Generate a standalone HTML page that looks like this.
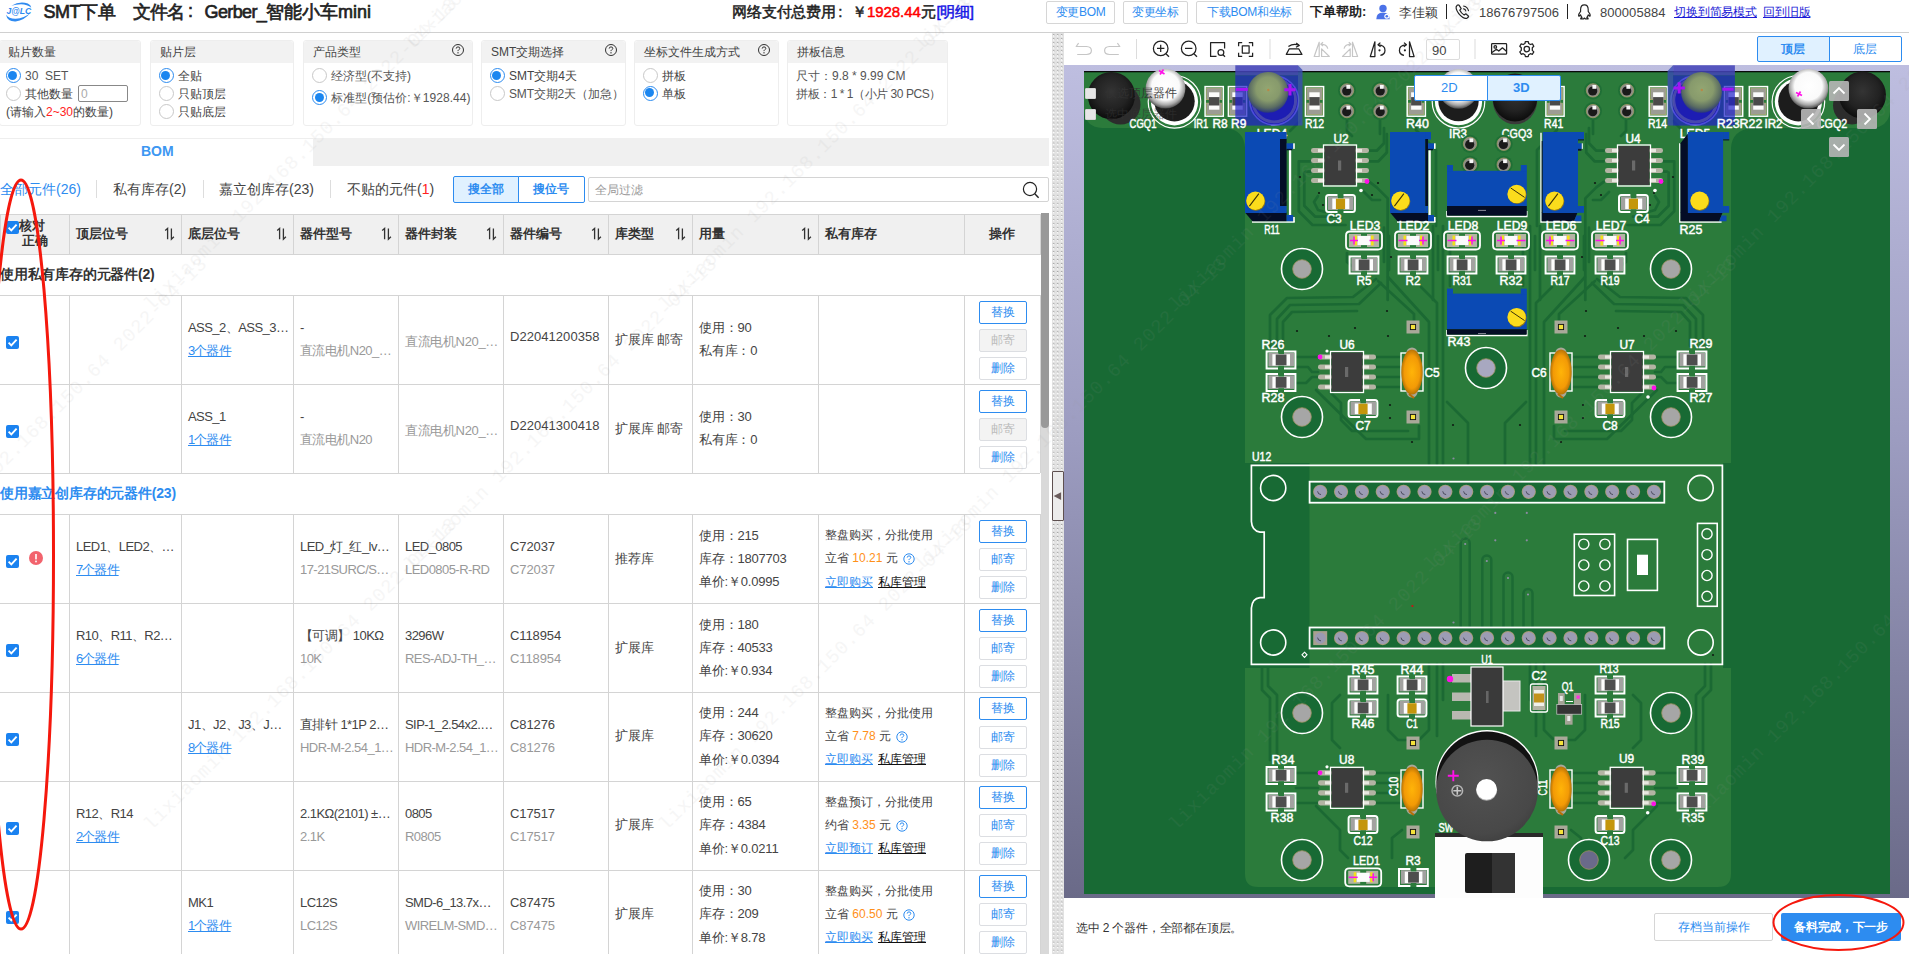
<!DOCTYPE html>
<html><head><meta charset="utf-8"><title>SMT</title>
<style>
*{box-sizing:border-box}
html,body{margin:0;padding:0}
body{width:1909px;height:954px;overflow:hidden;position:relative;background:#fff;
 font-family:"Liberation Sans",sans-serif;font-size:12px;color:#333;}
.a{position:absolute;white-space:nowrap;}
.t{position:absolute;white-space:nowrap;overflow:hidden;}
.b{font-weight:bold}
.blue{color:#2d8cf0}
.lnk{color:#2d8cf0;text-decoration:underline}
.gray{color:#999}
.btn{position:absolute;border:1px solid #dcdee2;border-radius:2px;background:#fff;color:#2d8cf0;text-align:center;white-space:nowrap;overflow:hidden}
.panel{position:absolute;top:40px;height:86px;border:1px solid #eee;border-radius:3px;background:#fff}
.panel .h{position:absolute;left:0;top:0;right:0;height:22px;background:#f2f2f2;border-radius:3px 3px 0 0}
.rad{position:absolute;width:15px;height:15px;border-radius:50%;border:1px solid #c8c8c8;background:#fff}
.rad.on{border:1.5px solid #2d8cf0}
.rad.on:after{content:"";position:absolute;left:1.5px;top:1.5px;width:9px;height:9px;border-radius:50%;background:#1b86f0}
.vl{position:absolute;width:1px;background:#d4d4d4}
.hl{position:absolute;height:1px;background:#d4d4d4}
.cb{position:absolute;width:13px;height:13px;border-radius:2px;background:#1a82f0}
.cb svg{position:absolute;left:0;top:0}
.c13{font-size:13px;line-height:16px}
</style></head>
<body>
<div class="hl" style="left:0;top:32px;width:1909px;background:#d0d0d0"></div>
<svg class="a" style="left:0px;top:0px" width="40" height="26" viewBox="0 0 40 26"><path d="M6 14.800 Q7.400 21.800 15.600 21.500 Q24.200 20.600 30.600 12.800 Q24.200 18.300 15.800 18.800 Q9 19 6 14.800Z" fill="#2f8af0"/><path d="M11.400 5.700 Q19.600 0.600 27.800 3.400 Q31 4.800 31.300 7.800 Q27.400 4.300 21 4.200 Q15.600 4.300 11.400 5.700Z" fill="#2f8af0"/><text x="6.600" y="13.900" font-family="Liberation Sans, sans-serif" font-size="9.6" font-weight="bold" font-style="italic" fill="#2f8af0" textLength="24.600" lengthAdjust="spacingAndGlyphs">J@LC</text></svg>
<div class="a" style="left:43.4px;top:-0.4px;font-size:18px;line-height:24px;color:#222;-webkit-text-stroke:0.65px #222;letter-spacing:-0.5px">SMT</div>
<div class="a" style="left:80.2px;top:-0.4px;font-size:18px;line-height:24px;color:#222;-webkit-text-stroke:0.65px #222;letter-spacing:-0.3px">下单</div>
<div class="a" style="left:132.7px;top:-0.4px;font-size:18px;line-height:24px;color:#222;-webkit-text-stroke:0.65px #222;letter-spacing:-0.7px">文件名</div>
<div class="a" style="left:188px;top:-0.8px;font-size:18px;line-height:24px;color:#222;-webkit-text-stroke:0.65px #222;">:</div>
<div class="a" style="left:204.5px;top:-0.4px;font-size:18px;line-height:24px;color:#222;-webkit-text-stroke:0.65px #222;letter-spacing:-0.62px">Gerber_</div>
<div class="a" style="left:266.4px;top:-0.4px;font-size:18px;line-height:24px;color:#222;-webkit-text-stroke:0.65px #222;letter-spacing:-0.15px">智能小车</div>
<div class="a" style="left:337.9px;top:-0.4px;font-size:18px;line-height:24px;color:#222;-webkit-text-stroke:0.65px #222;">mini</div>
<div class="a" style="left:732.4px;top:1px;font-size:15px;line-height:21px;color:#222;-webkit-text-stroke-width:0.5px;letter-spacing:-0.25px">网络支付总费用</div>
<div class="a" style="left:838.3px;top:0.7px;font-size:15px;line-height:21px;color:#222;-webkit-text-stroke-width:0.5px;">:</div>
<div class="a" style="left:852px;top:1px;font-size:15px;line-height:21px;color:#222;-webkit-text-stroke-width:0.5px;">￥</div>
<div class="a" style="left:866.9px;top:1px;font-size:15px;line-height:21px;color:#222;-webkit-text-stroke-width:0.5px;color:#f00;letter-spacing:-0.05px">1928.44</div>
<div class="a" style="left:921.2px;top:1px;font-size:15px;line-height:21px;color:#222;-webkit-text-stroke-width:0.5px;">元</div>
<div class="a" style="left:936.6px;top:1px;font-size:15px;line-height:21px;color:#222;-webkit-text-stroke-width:0.5px;color:#1414e6;letter-spacing:-0.3px">[明细]</div>
<div class="panel" style="left:-1px;width:142px"><div class="h"></div></div>
<div class="a" style="left:8px;top:42.5px;font-size:12px;line-height:18px;color:#444">贴片数量</div>
<div class="panel" style="left:150px;width:144px"><div class="h"></div></div>
<div class="a" style="left:160px;top:42.5px;font-size:12px;line-height:18px;color:#444">贴片层</div>
<div class="panel" style="left:303px;width:170px"><div class="h"></div></div>
<div class="a" style="left:313px;top:42.5px;font-size:12px;line-height:18px;color:#444">产品类型</div>
<svg class="a" style="left:451px;top:43px" width="14" height="14" viewBox="0 0 14 14"><circle cx="7" cy="7" r="5.5" fill="none" stroke="#333" stroke-width="1"/><path d="M5.2 5.6 Q5.2 3.9 7 3.9 Q8.8 3.9 8.8 5.4 Q8.8 6.4 7.6 6.9 Q7 7.2 7 8.1" fill="none" stroke="#333" stroke-width="1"/><rect x="6.4" y="9.2" width="1.2" height="1.2" fill="#333"/></svg>
<div class="panel" style="left:481px;width:145px"><div class="h"></div></div>
<div class="a" style="left:491px;top:42.5px;font-size:12px;line-height:18px;color:#444">SMT交期选择</div>
<svg class="a" style="left:604px;top:43px" width="14" height="14" viewBox="0 0 14 14"><circle cx="7" cy="7" r="5.5" fill="none" stroke="#333" stroke-width="1"/><path d="M5.2 5.6 Q5.2 3.9 7 3.9 Q8.8 3.9 8.8 5.4 Q8.8 6.4 7.6 6.9 Q7 7.2 7 8.1" fill="none" stroke="#333" stroke-width="1"/><rect x="6.4" y="9.2" width="1.2" height="1.2" fill="#333"/></svg>
<div class="panel" style="left:634px;width:145px"><div class="h"></div></div>
<div class="a" style="left:644px;top:42.5px;font-size:12px;line-height:18px;color:#444">坐标文件生成方式</div>
<svg class="a" style="left:757px;top:43px" width="14" height="14" viewBox="0 0 14 14"><circle cx="7" cy="7" r="5.5" fill="none" stroke="#333" stroke-width="1"/><path d="M5.2 5.6 Q5.2 3.9 7 3.9 Q8.8 3.9 8.8 5.4 Q8.8 6.4 7.6 6.9 Q7 7.2 7 8.1" fill="none" stroke="#333" stroke-width="1"/><rect x="6.4" y="9.2" width="1.2" height="1.2" fill="#333"/></svg>
<div class="panel" style="left:787px;width:161px"><div class="h"></div></div>
<div class="a" style="left:797px;top:42.5px;font-size:12px;line-height:18px;color:#444">拼板信息</div>
<div class="rad on" style="left:5.5px;top:68.0px"></div>
<div class="a" style="left:25px;top:67px;font-size:12px;line-height:18px;color:#555">30&nbsp; SET</div>
<div class="rad" style="left:5.5px;top:85.5px"></div>
<div class="a" style="left:25px;top:84.5px;font-size:12px;line-height:18px;color:#444">其他数量</div>
<div class="a" style="left:78px;top:85px;width:50px;height:17px;border:1px solid #888;border-radius:2px;background:#fff"></div>
<div class="a" style="left:81px;top:84.5px;font-size:12px;line-height:18px;color:#aaa">0</div>
<div class="a" style="left:6px;top:102.5px;font-size:12px;line-height:18px;color:#444">(请输入<span style="color:#f22">2~30</span>的数量)</div>
<div class="rad on" style="left:158.5px;top:68.0px"></div>
<div class="a" style="left:178px;top:67px;font-size:12px;line-height:18px;color:#444">全贴</div>
<div class="rad" style="left:158.5px;top:85.5px"></div>
<div class="a" style="left:178px;top:84.5px;font-size:12px;line-height:18px;color:#444">只贴顶层</div>
<div class="rad" style="left:158.5px;top:103.5px"></div>
<div class="a" style="left:178px;top:102.5px;font-size:12px;line-height:18px;color:#444">只贴底层</div>
<div class="rad" style="left:312.0px;top:68.0px"></div>
<div class="a" style="left:331px;top:67px;font-size:12px;line-height:18px;color:#555">经济型(不支持)</div>
<div class="rad on" style="left:312.0px;top:90.0px"></div>
<div class="a" style="left:331px;top:89px;font-size:12px;line-height:18px;color:#555;letter-spacing:0.05px">标准型(预估价:￥1928.44)</div>
<div class="rad on" style="left:489.5px;top:68.0px"></div>
<div class="a" style="left:509px;top:67px;font-size:12px;line-height:18px;color:#444">SMT交期4天</div>
<div class="rad" style="left:489.5px;top:85.5px"></div>
<div class="a" style="left:509px;top:84.5px;font-size:12px;line-height:18px;color:#555;letter-spacing:-0.15px">SMT交期2天（加急）</div>
<div class="rad" style="left:642.5px;top:68.0px"></div>
<div class="a" style="left:662px;top:67px;font-size:12px;line-height:18px;color:#444">拼板</div>
<div class="rad on" style="left:642.5px;top:85.5px"></div>
<div class="a" style="left:662px;top:84.5px;font-size:12px;line-height:18px;color:#444">单板</div>
<div class="a" style="left:796px;top:67px;font-size:12px;line-height:18px;color:#555">尺寸：9.8 * 9.99 CM</div>
<div class="a" style="left:796px;top:84.5px;font-size:12px;line-height:18px;color:#555;letter-spacing:-0.45px">拼板：1 * 1（小片 30 PCS）</div>
<div class="a" style="left:313px;top:138px;width:736px;height:28px;background:#f0f0f0"></div>
<div class="hl" style="left:0;top:138px;width:313px;background:#eee"></div>
<div class="a" style="left:141px;top:141.2px;font-size:14px;line-height:20px;font-weight:bold;color:#3d97f2">BOM</div>
<div class="a" style="left:0px;top:178.7px;font-size:14px;line-height:20px;color:#2d8cf0">全部元件(26)</div>
<div class="a" style="left:113px;top:178.7px;font-size:14px;line-height:20px;color:#444">私有库存(2)</div>
<div class="a" style="left:219px;top:178.7px;font-size:14px;line-height:20px;color:#444">嘉立创库存(23)</div>
<div class="a" style="left:347px;top:178.7px;font-size:14px;line-height:20px;color:#444">不贴的元件(<span style="color:#f22">1</span>)</div>
<div class="vl" style="left:96px;top:180px;height:18px;background:#ddd"></div>
<div class="vl" style="left:203px;top:180px;height:18px;background:#ddd"></div>
<div class="vl" style="left:330px;top:180px;height:18px;background:#ddd"></div>
<div class="a" style="left:453px;top:176px;width:66px;height:27px;border:1px solid #2d8cf0;border-radius:2px 0 0 2px;background:#e0f1ff"></div>
<div class="a" style="left:518px;top:176px;width:67px;height:27px;border:1px solid #2d8cf0;border-radius:0 2px 2px 0;background:#fff"></div>
<div class="a" style="left:468px;top:180px;font-size:12px;line-height:18px;color:#2d8cf0;font-weight:bold">搜全部</div>
<div class="a" style="left:533px;top:180px;font-size:12px;line-height:18px;color:#2d8cf0;font-weight:bold">搜位号</div>
<div class="a" style="left:588px;top:177px;width:461px;height:25px;border:1px solid #d4d4d4;border-radius:2px;background:#fff"></div>
<div class="a" style="left:595px;top:181px;font-size:12px;line-height:18px;color:#999">全局过滤</div>
<svg class="a" style="left:1021px;top:180px" width="20" height="20" viewBox="0 0 20 20"><circle cx="9" cy="9" r="6.6" fill="none" stroke="#222" stroke-width="1.2"/><path d="M13.8 13.8 L17.6 17.8" stroke="#222" stroke-width="1.4"/></svg>
<div class="a" style="left:0;top:214px;width:1040px;height:41px;background:#f0f0f0;border-top:1px solid #d4d4d4;border-bottom:1px solid #d4d4d4"></div>
<div class="vl" style="left:69px;top:214px;height:41px"></div>
<div class="vl" style="left:181px;top:214px;height:41px"></div>
<div class="vl" style="left:293px;top:214px;height:41px"></div>
<div class="vl" style="left:398px;top:214px;height:41px"></div>
<div class="vl" style="left:503px;top:214px;height:41px"></div>
<div class="vl" style="left:608px;top:214px;height:41px"></div>
<div class="vl" style="left:692px;top:214px;height:41px"></div>
<div class="vl" style="left:818px;top:214px;height:41px"></div>
<div class="vl" style="left:964px;top:214px;height:41px"></div>
<div class="vl" style="left:1040px;top:214px;height:41px"></div>
<div class="vl" style="left:0px;top:214px;height:41px"></div>
<div class="cb" style="left:6px;top:221px"><svg width="13" height="13" viewBox="0 0 13 13"><path d="M2.6 6.6 L5.3 9.3 L10.6 3.6" fill="none" stroke="#fff" stroke-width="1.9"/></svg></div>
<div class="a" style="left:19px;top:219.4px;font-size:13px;line-height:14px;font-weight:bold;color:#333">核对</div>
<div class="a" style="left:22px;top:233.5px;font-size:13px;line-height:14px;font-weight:bold;color:#333">正确</div>
<div class="a" style="left:76px;top:223.9px;font-size:13px;line-height:19px;font-weight:bold;color:#333">顶层位号</div>
<svg class="a" style="left:164px;top:226.5px" width="12" height="14" viewBox="0 0 12 14"><path d="M1.2 3.6 L3.6 1.5 L3.6 12.2" fill="none" stroke="#333" stroke-width="1.3"/><path d="M7.4 1.5 L7.4 12.2 L9.9 9.8" fill="none" stroke="#333" stroke-width="1.3"/></svg>
<div class="a" style="left:188px;top:223.9px;font-size:13px;line-height:19px;font-weight:bold;color:#333">底层位号</div>
<svg class="a" style="left:276px;top:226.5px" width="12" height="14" viewBox="0 0 12 14"><path d="M1.2 3.6 L3.6 1.5 L3.6 12.2" fill="none" stroke="#333" stroke-width="1.3"/><path d="M7.4 1.5 L7.4 12.2 L9.9 9.8" fill="none" stroke="#333" stroke-width="1.3"/></svg>
<div class="a" style="left:300px;top:223.9px;font-size:13px;line-height:19px;font-weight:bold;color:#333">器件型号</div>
<svg class="a" style="left:381px;top:226.5px" width="12" height="14" viewBox="0 0 12 14"><path d="M1.2 3.6 L3.6 1.5 L3.6 12.2" fill="none" stroke="#333" stroke-width="1.3"/><path d="M7.4 1.5 L7.4 12.2 L9.9 9.8" fill="none" stroke="#333" stroke-width="1.3"/></svg>
<div class="a" style="left:405px;top:223.9px;font-size:13px;line-height:19px;font-weight:bold;color:#333">器件封装</div>
<svg class="a" style="left:486px;top:226.5px" width="12" height="14" viewBox="0 0 12 14"><path d="M1.2 3.6 L3.6 1.5 L3.6 12.2" fill="none" stroke="#333" stroke-width="1.3"/><path d="M7.4 1.5 L7.4 12.2 L9.9 9.8" fill="none" stroke="#333" stroke-width="1.3"/></svg>
<div class="a" style="left:510px;top:223.9px;font-size:13px;line-height:19px;font-weight:bold;color:#333">器件编号</div>
<svg class="a" style="left:591px;top:226.5px" width="12" height="14" viewBox="0 0 12 14"><path d="M1.2 3.6 L3.6 1.5 L3.6 12.2" fill="none" stroke="#333" stroke-width="1.3"/><path d="M7.4 1.5 L7.4 12.2 L9.9 9.8" fill="none" stroke="#333" stroke-width="1.3"/></svg>
<div class="a" style="left:615px;top:223.9px;font-size:13px;line-height:19px;font-weight:bold;color:#333">库类型</div>
<svg class="a" style="left:675px;top:226.5px" width="12" height="14" viewBox="0 0 12 14"><path d="M1.2 3.6 L3.6 1.5 L3.6 12.2" fill="none" stroke="#333" stroke-width="1.3"/><path d="M7.4 1.5 L7.4 12.2 L9.9 9.8" fill="none" stroke="#333" stroke-width="1.3"/></svg>
<div class="a" style="left:699px;top:223.9px;font-size:13px;line-height:19px;font-weight:bold;color:#333">用量</div>
<svg class="a" style="left:801px;top:226.5px" width="12" height="14" viewBox="0 0 12 14"><path d="M1.2 3.6 L3.6 1.5 L3.6 12.2" fill="none" stroke="#333" stroke-width="1.3"/><path d="M7.4 1.5 L7.4 12.2 L9.9 9.8" fill="none" stroke="#333" stroke-width="1.3"/></svg>
<div class="a" style="left:825px;top:223.9px;font-size:13px;line-height:19px;font-weight:bold;color:#333">私有库存</div>
<div class="a" style="left:989px;top:223.9px;font-size:13px;line-height:19px;font-weight:bold;color:#333">操作</div>
<div class="a" style="left:0px;top:264px;font-size:14px;line-height:20px;font-weight:bold;color:#333;letter-spacing:-0.2px">使用私有库存的元器件(2)</div>
<div class="a" style="left:0px;top:483px;font-size:14px;line-height:20px;font-weight:bold;color:#2d8cf0;letter-spacing:-0.2px">使用嘉立创库存的元器件(23)</div>
<div class="hl" style="left:0;top:295px;width:1040px"></div>
<div class="hl" style="left:0;top:384px;width:1040px"></div>
<div class="hl" style="left:0;top:473px;width:1040px"></div>
<div class="hl" style="left:0;top:514px;width:1040px"></div>
<div class="hl" style="left:0;top:603px;width:1040px"></div>
<div class="hl" style="left:0;top:692px;width:1040px"></div>
<div class="hl" style="left:0;top:781px;width:1040px"></div>
<div class="hl" style="left:0;top:870px;width:1040px"></div>
<div class="vl" style="left:69px;top:295px;height:178px"></div>
<div class="vl" style="left:181px;top:295px;height:178px"></div>
<div class="vl" style="left:293px;top:295px;height:178px"></div>
<div class="vl" style="left:398px;top:295px;height:178px"></div>
<div class="vl" style="left:503px;top:295px;height:178px"></div>
<div class="vl" style="left:608px;top:295px;height:178px"></div>
<div class="vl" style="left:692px;top:295px;height:178px"></div>
<div class="vl" style="left:818px;top:295px;height:178px"></div>
<div class="vl" style="left:964px;top:295px;height:178px"></div>
<div class="vl" style="left:1040px;top:295px;height:178px"></div>
<div class="vl" style="left:69px;top:514px;height:440px"></div>
<div class="vl" style="left:181px;top:514px;height:440px"></div>
<div class="vl" style="left:293px;top:514px;height:440px"></div>
<div class="vl" style="left:398px;top:514px;height:440px"></div>
<div class="vl" style="left:503px;top:514px;height:440px"></div>
<div class="vl" style="left:608px;top:514px;height:440px"></div>
<div class="vl" style="left:692px;top:514px;height:440px"></div>
<div class="vl" style="left:818px;top:514px;height:440px"></div>
<div class="vl" style="left:964px;top:514px;height:440px"></div>
<div class="vl" style="left:1040px;top:514px;height:440px"></div>
<div class="cb" style="left:6px;top:336px"><svg width="13" height="13" viewBox="0 0 13 13"><path d="M2.6 6.6 L5.3 9.3 L10.6 3.6" fill="none" stroke="#fff" stroke-width="1.9"/></svg></div>
<div class="a" style="left:188px;top:318.1px;font-size:13px;line-height:19px;color:#444;letter-spacing:-0.55px;">ASS_2、ASS_3…</div>
<div class="a" style="left:188px;top:341.4px;font-size:13px;line-height:19px;color:#2d8cf0;text-decoration:underline;letter-spacing:-0.9px">3个器件</div>
<div class="a" style="left:300px;top:318.1px;font-size:13px;line-height:19px;color:#444;letter-spacing:-0.55px;">-</div>
<div class="a" style="left:300px;top:341.4px;font-size:13px;line-height:19px;color:#999;letter-spacing:-0.55px;">直流电机N20_…</div>
<div class="a" style="left:405px;top:332.4px;font-size:13px;line-height:19px;color:#999;letter-spacing:-0.35px">直流电机N20_…</div>
<div class="a" style="left:510px;top:326.9px;font-size:13px;line-height:19px;color:#444;letter-spacing:0.05px">D22041200358</div>
<div class="a" style="left:615px;top:329.6px;font-size:13px;line-height:19px;color:#444;letter-spacing:-0.2px">扩展库 邮寄</div>
<div class="a" style="left:699px;top:317.9px;font-size:13px;line-height:19px;color:#444;letter-spacing:-0.2px">使用：90</div>
<div class="a" style="left:699px;top:340.9px;font-size:13px;line-height:19px;color:#444;letter-spacing:-0.2px">私有库：0</div>
<div class="btn" style="left:979px;top:301px;width:48px;height:23px;line-height:21px;font-size:12px;border-color:#2d8cf0;">替换</div>
<div class="btn" style="left:979px;top:329px;width:48px;height:23px;line-height:21px;font-size:12px;background:#f3f3f3;color:#bbb;">邮寄</div>
<div class="btn" style="left:979px;top:357px;width:48px;height:23px;line-height:21px;font-size:12px;">删除</div>
<div class="cb" style="left:6px;top:425px"><svg width="13" height="13" viewBox="0 0 13 13"><path d="M2.6 6.6 L5.3 9.3 L10.6 3.6" fill="none" stroke="#fff" stroke-width="1.9"/></svg></div>
<div class="a" style="left:188px;top:407px;font-size:13px;line-height:19px;color:#444;letter-spacing:-0.55px;">ASS_1</div>
<div class="a" style="left:188px;top:430.3px;font-size:13px;line-height:19px;color:#2d8cf0;text-decoration:underline;letter-spacing:-0.9px">1个器件</div>
<div class="a" style="left:300px;top:407px;font-size:13px;line-height:19px;color:#444;letter-spacing:-0.55px;">-</div>
<div class="a" style="left:300px;top:430.3px;font-size:13px;line-height:19px;color:#999;letter-spacing:-0.55px;">直流电机N20</div>
<div class="a" style="left:405px;top:421.3px;font-size:13px;line-height:19px;color:#999;letter-spacing:-0.35px">直流电机N20_…</div>
<div class="a" style="left:510px;top:415.8px;font-size:13px;line-height:19px;color:#444;letter-spacing:0.05px">D22041300418</div>
<div class="a" style="left:615px;top:418.5px;font-size:13px;line-height:19px;color:#444;letter-spacing:-0.2px">扩展库 邮寄</div>
<div class="a" style="left:699px;top:406.8px;font-size:13px;line-height:19px;color:#444;letter-spacing:-0.2px">使用：30</div>
<div class="a" style="left:699px;top:429.8px;font-size:13px;line-height:19px;color:#444;letter-spacing:-0.2px">私有库：0</div>
<div class="btn" style="left:979px;top:390px;width:48px;height:23px;line-height:21px;font-size:12px;border-color:#2d8cf0;">替换</div>
<div class="btn" style="left:979px;top:418px;width:48px;height:23px;line-height:21px;font-size:12px;background:#f3f3f3;color:#bbb;">邮寄</div>
<div class="btn" style="left:979px;top:446px;width:48px;height:23px;line-height:21px;font-size:12px;">删除</div>
<div class="cb" style="left:6px;top:555px"><svg width="13" height="13" viewBox="0 0 13 13"><path d="M2.6 6.6 L5.3 9.3 L10.6 3.6" fill="none" stroke="#fff" stroke-width="1.9"/></svg></div>
<svg class="a" style="left:29px;top:551px" width="14" height="14" viewBox="0 0 14 14"><circle cx="7" cy="7" r="7" fill="#f2636d"/><rect x="6.2" y="3" width="1.6" height="5.4" fill="#fff"/><rect x="6.2" y="9.6" width="1.6" height="1.7" fill="#fff"/></svg>
<div class="a" style="left:76px;top:537.1px;font-size:13px;line-height:19px;color:#444;letter-spacing:-0.55px;">LED1、LED2、…</div>
<div class="a" style="left:76px;top:560.4px;font-size:13px;line-height:19px;color:#2d8cf0;text-decoration:underline;letter-spacing:-0.9px">7个器件</div>
<div class="a" style="left:300px;top:537.1px;font-size:13px;line-height:19px;color:#444;letter-spacing:-0.55px;">LED_灯_红_lv…</div>
<div class="a" style="left:300px;top:560.4px;font-size:13px;line-height:19px;color:#999;letter-spacing:-0.55px;">17-21SURC/S…</div>
<div class="a" style="left:405px;top:537.1px;font-size:13px;line-height:19px;color:#444;letter-spacing:-0.55px;">LED_0805</div>
<div class="a" style="left:405px;top:560.4px;font-size:13px;line-height:19px;color:#999;letter-spacing:-0.55px;">LED0805-R-RD</div>
<div class="a" style="left:510px;top:537.1px;font-size:13px;line-height:19px;color:#444;letter-spacing:-0.1px;">C72037</div>
<div class="a" style="left:510px;top:560.4px;font-size:13px;line-height:19px;color:#999;letter-spacing:-0.1px;">C72037</div>
<div class="a" style="left:615px;top:548.6px;font-size:13px;line-height:19px;color:#444;letter-spacing:-0.2px">推荐库</div>
<div class="a" style="left:699px;top:525.6px;font-size:13px;line-height:19px;color:#444;letter-spacing:-0.2px">使用：215</div>
<div class="a" style="left:699px;top:548.7px;font-size:13px;line-height:19px;color:#444;letter-spacing:-0.2px">库存：1807703</div>
<div class="a" style="left:699px;top:572.1px;font-size:13px;line-height:19px;color:#444;letter-spacing:-0.2px">单价:￥0.0995</div>
<div class="a" style="left:825px;top:526.1px;font-size:12px;line-height:18px;color:#444">整盘购买，分批使用</div>
<div class="a" style="left:825px;top:549.2px;font-size:12px;line-height:18px;color:#444">立省 <span style="color:#ff9019">10.21</span> 元</div>
<svg class="a" style="left:902px;top:552.4px" width="14" height="14" viewBox="0 0 14 14"><circle cx="7" cy="7" r="5.2" fill="none" stroke="#2d8cf0" stroke-width="1"/><path d="M5.2 5.6 Q5.2 3.9 7 3.9 Q8.8 3.9 8.8 5.4 Q8.8 6.4 7.6 6.9 Q7 7.2 7 8.1" fill="none" stroke="#2d8cf0" stroke-width="1"/><rect x="6.4" y="9.2" width="1.2" height="1.2" fill="#2d8cf0"/></svg>
<div class="a" style="left:825px;top:572.6px;font-size:12px;line-height:18px;"><span class="lnk">立即购买</span></div>
<div class="a" style="left:878px;top:572.6px;font-size:12px;line-height:18px;"><span style="color:#111;text-decoration:underline">私库管理</span></div>
<div class="btn" style="left:979px;top:520px;width:48px;height:23px;line-height:21px;font-size:12px;border-color:#2d8cf0;">替换</div>
<div class="btn" style="left:979px;top:548px;width:48px;height:23px;line-height:21px;font-size:12px;">邮寄</div>
<div class="btn" style="left:979px;top:576px;width:48px;height:23px;line-height:21px;font-size:12px;">删除</div>
<div class="cb" style="left:6px;top:644px"><svg width="13" height="13" viewBox="0 0 13 13"><path d="M2.6 6.6 L5.3 9.3 L10.6 3.6" fill="none" stroke="#fff" stroke-width="1.9"/></svg></div>
<div class="a" style="left:76px;top:626px;font-size:13px;line-height:19px;color:#444;letter-spacing:-0.55px;">R10、R11、R2…</div>
<div class="a" style="left:76px;top:649.3px;font-size:13px;line-height:19px;color:#2d8cf0;text-decoration:underline;letter-spacing:-0.9px">6个器件</div>
<div class="a" style="left:300px;top:626px;font-size:13px;line-height:19px;color:#444;letter-spacing:-0.55px;">【可调】&nbsp;10KΩ</div>
<div class="a" style="left:300px;top:649.3px;font-size:13px;line-height:19px;color:#999;letter-spacing:-0.55px;">10K</div>
<div class="a" style="left:405px;top:626px;font-size:13px;line-height:19px;color:#444;letter-spacing:-0.55px;">3296W</div>
<div class="a" style="left:405px;top:649.3px;font-size:13px;line-height:19px;color:#999;letter-spacing:-0.55px;">RES-ADJ-TH_…</div>
<div class="a" style="left:510px;top:626px;font-size:13px;line-height:19px;color:#444;letter-spacing:-0.1px;">C118954</div>
<div class="a" style="left:510px;top:649.3px;font-size:13px;line-height:19px;color:#999;letter-spacing:-0.1px;">C118954</div>
<div class="a" style="left:615px;top:637.5px;font-size:13px;line-height:19px;color:#444;letter-spacing:-0.2px">扩展库</div>
<div class="a" style="left:699px;top:614.5px;font-size:13px;line-height:19px;color:#444;letter-spacing:-0.2px">使用：180</div>
<div class="a" style="left:699px;top:637.6px;font-size:13px;line-height:19px;color:#444;letter-spacing:-0.2px">库存：40533</div>
<div class="a" style="left:699px;top:661px;font-size:13px;line-height:19px;color:#444;letter-spacing:-0.2px">单价:￥0.934</div>
<div class="btn" style="left:979px;top:609px;width:48px;height:23px;line-height:21px;font-size:12px;border-color:#2d8cf0;">替换</div>
<div class="btn" style="left:979px;top:637px;width:48px;height:23px;line-height:21px;font-size:12px;">邮寄</div>
<div class="btn" style="left:979px;top:665px;width:48px;height:23px;line-height:21px;font-size:12px;">删除</div>
<div class="cb" style="left:6px;top:733px"><svg width="13" height="13" viewBox="0 0 13 13"><path d="M2.6 6.6 L5.3 9.3 L10.6 3.6" fill="none" stroke="#fff" stroke-width="1.9"/></svg></div>
<div class="a" style="left:188px;top:714.8px;font-size:13px;line-height:19px;color:#444;letter-spacing:-0.55px;">J1、J2、J3、J…</div>
<div class="a" style="left:188px;top:738.1px;font-size:13px;line-height:19px;color:#2d8cf0;text-decoration:underline;letter-spacing:-0.9px">8个器件</div>
<div class="a" style="left:300px;top:714.8px;font-size:13px;line-height:19px;color:#444;letter-spacing:-0.55px;">直排针 1*1P 2…</div>
<div class="a" style="left:300px;top:738.1px;font-size:13px;line-height:19px;color:#999;letter-spacing:-0.55px;">HDR-M-2.54_1…</div>
<div class="a" style="left:405px;top:714.8px;font-size:13px;line-height:19px;color:#444;letter-spacing:-0.55px;">SIP-1_2.54x2.…</div>
<div class="a" style="left:405px;top:738.1px;font-size:13px;line-height:19px;color:#999;letter-spacing:-0.55px;">HDR-M-2.54_1…</div>
<div class="a" style="left:510px;top:714.8px;font-size:13px;line-height:19px;color:#444;letter-spacing:-0.1px;">C81276</div>
<div class="a" style="left:510px;top:738.1px;font-size:13px;line-height:19px;color:#999;letter-spacing:-0.1px;">C81276</div>
<div class="a" style="left:615px;top:726.3px;font-size:13px;line-height:19px;color:#444;letter-spacing:-0.2px">扩展库</div>
<div class="a" style="left:699px;top:703.3px;font-size:13px;line-height:19px;color:#444;letter-spacing:-0.2px">使用：244</div>
<div class="a" style="left:699px;top:726.4px;font-size:13px;line-height:19px;color:#444;letter-spacing:-0.2px">库存：30620</div>
<div class="a" style="left:699px;top:749.8px;font-size:13px;line-height:19px;color:#444;letter-spacing:-0.2px">单价:￥0.0394</div>
<div class="a" style="left:825px;top:703.8px;font-size:12px;line-height:18px;color:#444">整盘购买，分批使用</div>
<div class="a" style="left:825px;top:726.9px;font-size:12px;line-height:18px;color:#444">立省 <span style="color:#ff9019">7.78</span> 元</div>
<svg class="a" style="left:895px;top:730.1px" width="14" height="14" viewBox="0 0 14 14"><circle cx="7" cy="7" r="5.2" fill="none" stroke="#2d8cf0" stroke-width="1"/><path d="M5.2 5.6 Q5.2 3.9 7 3.9 Q8.8 3.9 8.8 5.4 Q8.8 6.4 7.6 6.9 Q7 7.2 7 8.1" fill="none" stroke="#2d8cf0" stroke-width="1"/><rect x="6.4" y="9.2" width="1.2" height="1.2" fill="#2d8cf0"/></svg>
<div class="a" style="left:825px;top:750.3px;font-size:12px;line-height:18px;"><span class="lnk">立即购买</span></div>
<div class="a" style="left:878px;top:750.3px;font-size:12px;line-height:18px;"><span style="color:#111;text-decoration:underline">私库管理</span></div>
<div class="btn" style="left:979px;top:697px;width:48px;height:23px;line-height:21px;font-size:12px;border-color:#2d8cf0;">替换</div>
<div class="btn" style="left:979px;top:726px;width:48px;height:23px;line-height:21px;font-size:12px;">邮寄</div>
<div class="btn" style="left:979px;top:754px;width:48px;height:23px;line-height:21px;font-size:12px;">删除</div>
<div class="cb" style="left:6px;top:822px"><svg width="13" height="13" viewBox="0 0 13 13"><path d="M2.6 6.6 L5.3 9.3 L10.6 3.6" fill="none" stroke="#fff" stroke-width="1.9"/></svg></div>
<div class="a" style="left:76px;top:803.7px;font-size:13px;line-height:19px;color:#444;letter-spacing:-0.55px;">R12、R14</div>
<div class="a" style="left:76px;top:827px;font-size:13px;line-height:19px;color:#2d8cf0;text-decoration:underline;letter-spacing:-0.9px">2个器件</div>
<div class="a" style="left:300px;top:803.7px;font-size:13px;line-height:19px;color:#444;letter-spacing:-0.55px;">2.1KΩ(2101) ±…</div>
<div class="a" style="left:300px;top:827px;font-size:13px;line-height:19px;color:#999;letter-spacing:-0.55px;">2.1K</div>
<div class="a" style="left:405px;top:803.7px;font-size:13px;line-height:19px;color:#444;letter-spacing:-0.55px;">0805</div>
<div class="a" style="left:405px;top:827px;font-size:13px;line-height:19px;color:#999;letter-spacing:-0.55px;">R0805</div>
<div class="a" style="left:510px;top:803.7px;font-size:13px;line-height:19px;color:#444;letter-spacing:-0.1px;">C17517</div>
<div class="a" style="left:510px;top:827px;font-size:13px;line-height:19px;color:#999;letter-spacing:-0.1px;">C17517</div>
<div class="a" style="left:615px;top:815.2px;font-size:13px;line-height:19px;color:#444;letter-spacing:-0.2px">扩展库</div>
<div class="a" style="left:699px;top:792.2px;font-size:13px;line-height:19px;color:#444;letter-spacing:-0.2px">使用：65</div>
<div class="a" style="left:699px;top:815.3px;font-size:13px;line-height:19px;color:#444;letter-spacing:-0.2px">库存：4384</div>
<div class="a" style="left:699px;top:838.7px;font-size:13px;line-height:19px;color:#444;letter-spacing:-0.2px">单价:￥0.0211</div>
<div class="a" style="left:825px;top:792.7px;font-size:12px;line-height:18px;color:#444">整盘预订，分批使用</div>
<div class="a" style="left:825px;top:815.8px;font-size:12px;line-height:18px;color:#444">约省 <span style="color:#ff9019">3.35</span> 元</div>
<svg class="a" style="left:895px;top:819.0px" width="14" height="14" viewBox="0 0 14 14"><circle cx="7" cy="7" r="5.2" fill="none" stroke="#2d8cf0" stroke-width="1"/><path d="M5.2 5.6 Q5.2 3.9 7 3.9 Q8.8 3.9 8.8 5.4 Q8.8 6.4 7.6 6.9 Q7 7.2 7 8.1" fill="none" stroke="#2d8cf0" stroke-width="1"/><rect x="6.4" y="9.2" width="1.2" height="1.2" fill="#2d8cf0"/></svg>
<div class="a" style="left:825px;top:839.2px;font-size:12px;line-height:18px;"><span class="lnk">立即预订</span></div>
<div class="a" style="left:878px;top:839.2px;font-size:12px;line-height:18px;"><span style="color:#111;text-decoration:underline">私库管理</span></div>
<div class="btn" style="left:979px;top:786px;width:48px;height:23px;line-height:21px;font-size:12px;border-color:#2d8cf0;">替换</div>
<div class="btn" style="left:979px;top:814px;width:48px;height:23px;line-height:21px;font-size:12px;">邮寄</div>
<div class="btn" style="left:979px;top:842px;width:48px;height:23px;line-height:21px;font-size:12px;">删除</div>
<div class="cb" style="left:6px;top:911px"><svg width="13" height="13" viewBox="0 0 13 13"><path d="M2.6 6.6 L5.3 9.3 L10.6 3.6" fill="none" stroke="#fff" stroke-width="1.9"/></svg></div>
<div class="a" style="left:188px;top:892.6px;font-size:13px;line-height:19px;color:#444;letter-spacing:-0.55px;">MK1</div>
<div class="a" style="left:188px;top:915.9px;font-size:13px;line-height:19px;color:#2d8cf0;text-decoration:underline;letter-spacing:-0.9px">1个器件</div>
<div class="a" style="left:300px;top:892.6px;font-size:13px;line-height:19px;color:#444;letter-spacing:-0.55px;">LC12S</div>
<div class="a" style="left:300px;top:915.9px;font-size:13px;line-height:19px;color:#999;letter-spacing:-0.55px;">LC12S</div>
<div class="a" style="left:405px;top:892.6px;font-size:13px;line-height:19px;color:#444;letter-spacing:-0.55px;">SMD-6_13.7x…</div>
<div class="a" style="left:405px;top:915.9px;font-size:13px;line-height:19px;color:#999;letter-spacing:-0.55px;">WIRELM-SMD…</div>
<div class="a" style="left:510px;top:892.6px;font-size:13px;line-height:19px;color:#444;letter-spacing:-0.1px;">C87475</div>
<div class="a" style="left:510px;top:915.9px;font-size:13px;line-height:19px;color:#999;letter-spacing:-0.1px;">C87475</div>
<div class="a" style="left:615px;top:904.1px;font-size:13px;line-height:19px;color:#444;letter-spacing:-0.2px">扩展库</div>
<div class="a" style="left:699px;top:881.1px;font-size:13px;line-height:19px;color:#444;letter-spacing:-0.2px">使用：30</div>
<div class="a" style="left:699px;top:904.2px;font-size:13px;line-height:19px;color:#444;letter-spacing:-0.2px">库存：209</div>
<div class="a" style="left:699px;top:927.6px;font-size:13px;line-height:19px;color:#444;letter-spacing:-0.2px">单价:￥8.78</div>
<div class="a" style="left:825px;top:881.6px;font-size:12px;line-height:18px;color:#444">整盘购买，分批使用</div>
<div class="a" style="left:825px;top:904.7px;font-size:12px;line-height:18px;color:#444">立省 <span style="color:#ff9019">60.50</span> 元</div>
<svg class="a" style="left:902px;top:907.9px" width="14" height="14" viewBox="0 0 14 14"><circle cx="7" cy="7" r="5.2" fill="none" stroke="#2d8cf0" stroke-width="1"/><path d="M5.2 5.6 Q5.2 3.9 7 3.9 Q8.8 3.9 8.8 5.4 Q8.8 6.4 7.6 6.9 Q7 7.2 7 8.1" fill="none" stroke="#2d8cf0" stroke-width="1"/><rect x="6.4" y="9.2" width="1.2" height="1.2" fill="#2d8cf0"/></svg>
<div class="a" style="left:825px;top:928.1px;font-size:12px;line-height:18px;"><span class="lnk">立即购买</span></div>
<div class="a" style="left:878px;top:928.1px;font-size:12px;line-height:18px;"><span style="color:#111;text-decoration:underline">私库管理</span></div>
<div class="btn" style="left:979px;top:875px;width:48px;height:23px;line-height:21px;font-size:12px;border-color:#2d8cf0;">替换</div>
<div class="btn" style="left:979px;top:903px;width:48px;height:23px;line-height:21px;font-size:12px;">邮寄</div>
<div class="btn" style="left:979px;top:931px;width:48px;height:23px;line-height:21px;font-size:12px;">删除</div>
<div class="a" style="left:1041px;top:214px;width:8px;height:740px;background:#d9d9d9"></div>
<div class="a" style="left:1041px;top:213px;width:8px;height:215px;background:#999;border-radius:0 0 4px 4px"></div>
<div class="a" style="left:1052px;top:33px;width:12px;height:921px;background-color:#e2e2e2;background-image:radial-gradient(circle at 1.5px 2.6px,#fafafa 0.7px,rgba(0,0,0,0) 1px),radial-gradient(circle at 1.5px 1.5px,#a8a8a8 0.75px,rgba(0,0,0,0) 1.1px);background-size:4.03px 4.03px;background-position:0px 0.4px"></div>
<div class="a" style="left:1052px;top:471px;width:12px;height:50px;background:#ececec;border:1px solid #5e5050;border-radius:1px"></div>
<svg class="a" style="left:1052px;top:488px" width="12" height="16"><path d="M1.600 8.100 L9.100 4.300 L9.100 11.900Z" fill="#6a5c5c"/></svg>
<svg class="a" style="left:0;top:170px;z-index:50" width="70" height="770" viewBox="0 0 70 770"><ellipse cx="21" cy="384.500" rx="32.500" ry="374.500" fill="none" stroke="#f5180d" stroke-width="3"/></svg>
<div class="btn" style="left:1046px;top:1px;width:69px;height:23px;line-height:21px;font-size:12px;border-color:#d6d6d6;letter-spacing:-0.3px">变更BOM</div>
<div class="btn" style="left:1123px;top:1px;width:65px;height:23px;line-height:21px;font-size:12px;border-color:#d6d6d6;letter-spacing:-0.3px">变更坐标</div>
<div class="btn" style="left:1196px;top:1px;width:107px;height:23px;line-height:21px;font-size:12px;border-color:#d6d6d6;letter-spacing:-0.3px">下载BOM和坐标</div>
<div class="a" style="left:1310px;top:1.5px;font-size:13px;line-height:19px;font-weight:bold;color:#222;letter-spacing:0px">下单帮助:</div>
<svg class="a" style="left:1375px;top:3px" width="18" height="18" viewBox="0 0 18 18"><circle cx="8" cy="5.400" r="3.700" fill="#4b72e8"/><path d="M1.300 16.300 Q1.200 9.600 8 9.600 Q14.800 9.600 14.700 16.300 Z" fill="#4b72e8"/><circle cx="11.800" cy="13.300" r="2.500" fill="#fff"/><circle cx="11.800" cy="13.300" r="1.300" fill="#4b72e8"/></svg>
<div class="a" style="left:1399px;top:2.5px;font-size:13px;line-height:19px;color:#444">李佳颖</div>
<div class="a" style="left:1446px;top:4px;width:1.2px;height:15px;background:#222"></div>
<svg class="a" style="left:1454px;top:3px" width="18" height="18" viewBox="0 0 18 18"><path d="M3.2 2.2 Q1.6 3.4 2.2 5.6 Q3.6 10.6 8.6 14.2 Q11.4 16.2 13.2 15 Q14.6 14 14.6 13.2 L11.8 10.8 L10.2 12 Q7.4 10.4 5.8 7.2 L7.2 5.6 L5 2.2 Q4.2 1.6 3.2 2.2Z" fill="none" stroke="#222" stroke-width="1.2" stroke-linejoin="round"/><path d="M9.2 3 Q13.8 3.6 14.6 8.2" fill="none" stroke="#222" stroke-width="1.1"/><path d="M9.2 5.6 Q11.6 6 12 8.4" fill="none" stroke="#222" stroke-width="1.1"/></svg>
<div class="a" style="left:1479px;top:2.5px;font-size:13px;line-height:19px;color:#444;letter-spacing:0.05px">18676797506</div>
<div class="a" style="left:1567px;top:4px;width:1.2px;height:15px;background:#222"></div>
<svg class="a" style="left:1576px;top:3px" width="17" height="18" viewBox="0 0 17 18"><path d="M8.4 1.8 Q4.6 1.8 4.6 6.6 L4.6 8.4 Q2.4 11 2.6 13 Q3.4 13.4 4.6 11.8 Q5 13.4 6 14.4 Q4.4 15 4.6 15.8 L7.6 15.8 L8.4 15 L9.2 15.8 L12.2 15.8 Q12.4 15 10.8 14.4 Q11.8 13.4 12.2 11.8 Q13.4 13.4 14.2 13 Q14.4 11 12.2 8.4 L12.2 6.6 Q12.2 1.8 8.4 1.8Z" fill="none" stroke="#222" stroke-width="1.15" stroke-linejoin="round"/></svg>
<div class="a" style="left:1600px;top:2.5px;font-size:13px;line-height:19px;color:#444;letter-spacing:0.05px">800005884</div>
<div class="a" style="left:1674px;top:3px;font-size:12px;line-height:18px;color:#1a1ad6;text-decoration:underline;letter-spacing:-0.15px">切换到简易模式</div>
<div class="a" style="left:1763px;top:3px;font-size:12px;line-height:18px;color:#1a1ad6;text-decoration:underline;letter-spacing:-0.15px">回到旧版</div>
<svg class="a" style="left:1064px;top:33px" width="845" height="33" viewBox="1064 33 845 33"><path d="M1078.600 43.200 L1076.200 46.500 L1086.500 46.500 Q1091.400 46.800 1091.400 50.600 Q1091.400 54.500 1086.500 54.500 L1077.200 54.500" fill="none" stroke="#c6c6c6" stroke-width="1.2" stroke-linejoin="round"/><path d="M1117.400 43.200 L1119.800 46.500 L1109.500 46.500 Q1104.600 46.800 1104.600 50.600 Q1104.600 54.500 1109.500 54.500 L1118.800 54.500" fill="none" stroke="#c6c6c6" stroke-width="1.2" stroke-linejoin="round"/><rect x="1136" y="39" width="1" height="20" fill="#dcdcdc"/><circle cx="1160.700" cy="48.400" r="7.300" fill="none" stroke="#222" stroke-width="1.25" stroke-linejoin="round"/><path d="M1165.900 53.700 L1169 56.800" fill="none" stroke="#222" stroke-width="1.25" stroke-linejoin="round"/><path d="M1157 48.400 L1164.400 48.400 M1160.700 44.700 L1160.700 52.100" fill="none" stroke="#222" stroke-width="1.25" stroke-linejoin="round"/><circle cx="1188.700" cy="48.400" r="7.300" fill="none" stroke="#222" stroke-width="1.25" stroke-linejoin="round"/><path d="M1193.900 53.700 L1197 56.800" fill="none" stroke="#222" stroke-width="1.25" stroke-linejoin="round"/><path d="M1185 48.400 L1192.400 48.400" fill="none" stroke="#222" stroke-width="1.25" stroke-linejoin="round"/><path d="M1224.600 48.600 L1224.600 42.600 L1210.600 42.600 L1210.600 56.400 L1216.500 56.400" fill="none" stroke="#222" stroke-width="1.25" stroke-linejoin="round"/><circle cx="1220.900" cy="52.600" r="2.900" fill="none" stroke="#222" stroke-width="1.25" stroke-linejoin="round"/><path d="M1223 54.800 L1225 56.800" fill="none" stroke="#222" stroke-width="1.25" stroke-linejoin="round"/><path d="M1238.600 46.200 L1238.600 42.600 L1242.200 42.600 M1248.800 42.600 L1252.600 42.600 L1252.600 46.200 M1252.600 52.800 L1252.600 56.400 L1248.800 56.400 M1242.200 56.400 L1238.600 56.400 L1238.600 52.800" fill="none" stroke="#222" stroke-width="1.25" stroke-linejoin="round"/><rect x="1242.300" y="45.800" width="6.800" height="7.300" fill="none" stroke="#222" stroke-width="1.25" stroke-linejoin="round"/><rect x="1269.500" y="39" width="1" height="20" fill="#dcdcdc"/><path d="M1289.300 48.800 L1286.300 54.400 L1301.900 54.400 L1298.700 48.800 Z" fill="none" stroke="#222" stroke-width="1.25" stroke-linejoin="round"/><path d="M1288.400 46.600 Q1293.500 42.800 1298.900 45.200" fill="none" stroke="#222" stroke-width="1.25" stroke-linejoin="round"/><path d="M1296.200 43 L1299.300 45.400 L1296 47.300" fill="none" stroke="#222" stroke-width="1.25" stroke-linejoin="round"/><path d="M1319.200 42.200 L1319.200 56.500 L1314.200 56.500 Z" fill="none" stroke="#c6c6c6" stroke-width="1.2" stroke-linejoin="round"/><path d="M1321.600 48.800 L1329.300 56.500 L1321.600 56.500 Z" fill="none" stroke="#c6c6c6" stroke-width="1.2" stroke-linejoin="round"/><path d="M1321 44.200 Q1326.600 44.400 1327.800 48.600" fill="none" stroke="#c6c6c6" stroke-width="1.2" stroke-linejoin="round"/><path d="M1323 42.200 L1320.800 44.200 L1323.200 46" fill="none" stroke="#c6c6c6" stroke-width="1.2" stroke-linejoin="round"/><path d="M1352.500 42.200 L1352.500 56.500 L1357.600 56.500 Z" fill="none" stroke="#c6c6c6" stroke-width="1.2" stroke-linejoin="round"/><path d="M1350.200 48.800 L1342.500 56.500 L1350.200 56.500 Z" fill="none" stroke="#c6c6c6" stroke-width="1.2" stroke-linejoin="round"/><path d="M1350.800 44.200 Q1345.200 44.400 1344 48.600" fill="none" stroke="#c6c6c6" stroke-width="1.2" stroke-linejoin="round"/><path d="M1348.800 42.200 L1351 44.200 L1348.600 46" fill="none" stroke="#c6c6c6" stroke-width="1.2" stroke-linejoin="round"/><path d="M1374.900 41.800 L1374.900 56.500 L1370.300 56.500 Z" fill="none" stroke="#222" stroke-width="1.25" stroke-linejoin="round"/><path d="M1378.300 44.800 Q1385 45 1385 50.400 Q1384.800 54.600 1380.400 55.400" fill="none" stroke="#222" stroke-width="1.25" stroke-linejoin="round"/><path d="M1380.400 42.600 L1378 44.800 L1380.600 46.800" fill="none" stroke="#222" stroke-width="1.25" stroke-linejoin="round"/><circle cx="1379.500" cy="50.300" r="1.100" fill="#222"/><path d="M1409.500 41.800 L1409.500 56.500 L1414.100 56.500 Z" fill="none" stroke="#222" stroke-width="1.25" stroke-linejoin="round"/><path d="M1406.100 44.800 Q1399.400 45 1399.400 50.400 Q1399.600 54.600 1404 55.400" fill="none" stroke="#222" stroke-width="1.25" stroke-linejoin="round"/><path d="M1404 42.600 L1406.400 44.800 L1403.800 46.800" fill="none" stroke="#222" stroke-width="1.25" stroke-linejoin="round"/><circle cx="1404.900" cy="50.300" r="1.100" fill="#222"/><rect x="1474.500" y="39" width="1" height="20" fill="#dcdcdc"/><rect x="1491.600" y="43.600" width="15" height="10.600" rx="0.8" fill="none" stroke="#222" stroke-width="1.25" stroke-linejoin="round"/><circle cx="1495.300" cy="46.900" r="1.300" fill="none" stroke="#222" stroke-width="1.25" stroke-linejoin="round"/><path d="M1492 52.600 L1496.400 49.200 L1498.800 51 L1502.400 47.800 L1506.400 51.200" fill="none" stroke="#222" stroke-width="1.25" stroke-linejoin="round"/><circle cx="1526.800" cy="49.100" r="2.700" fill="none" stroke="#222" stroke-width="1.25" stroke-linejoin="round"/><path d="M1525.400 41.500 L1528.200 41.500 L1528.700 43.500 L1530.400 44.500 L1532.400 43.900 L1533.800 46.300 L1532.300 47.800 L1532.300 50.400 L1533.800 51.900 L1532.400 54.300 L1530.400 53.700 L1528.700 54.700 L1528.200 56.700 L1525.400 56.700 L1524.900 54.700 L1523.200 53.700 L1521.200 54.300 L1519.800 51.900 L1521.300 50.400 L1521.300 47.800 L1519.800 46.300 L1521.200 43.900 L1523.200 44.500 L1524.900 43.500 Z" fill="none" stroke="#222" stroke-width="1.25" stroke-linejoin="round"/></svg>
<div class="a" style="left:1426px;top:39px;width:34px;height:21px;border:1px solid #dcdcdc;border-radius:2px;background:#fff"></div>
<div class="a" style="left:1432px;top:40.5px;font-size:13px;line-height:19px;color:#444">90</div>
<div class="a" style="left:1757px;top:36px;width:73px;height:26px;border:1px solid #2d8cf0;border-radius:2px 0 0 2px;background:#e0f1ff"></div>
<div class="a" style="left:1829px;top:36px;width:73px;height:26px;border:1px solid #2d8cf0;border-radius:0 2px 2px 0;background:#fff"></div>
<div class="a" style="left:1781px;top:39.5px;font-size:12px;line-height:18px;color:#2d8cf0;font-weight:bold">顶层</div>
<div class="a" style="left:1853px;top:39.5px;font-size:12px;line-height:18px;color:#2d8cf0">底层</div>
<div class="a" style="left:1064px;top:898px;width:845px;height:56px;background:#fff"></div>
<div class="a" style="left:1076px;top:918.5px;font-size:12px;line-height:18px;color:#333;letter-spacing:-0.2px">选中 2 个器件，全部都在顶层。</div>
<div class="btn" style="left:1654px;top:913px;width:119px;height:28px;line-height:26px;font-size:12px;border-color:#d6d6d6">存档当前操作</div>
<div class="btn" style="left:1781px;top:913px;width:120px;height:28px;line-height:28px;font-size:12px;border:0;background:#2d8cf0;color:#fff;font-weight:bold;letter-spacing:-0.3px">备料完成，下一步</div>
<svg class="a" style="left:1765px;top:890px;z-index:50" width="144" height="64" viewBox="0 0 144 64"><ellipse cx="73.5" cy="32.5" rx="65" ry="27.5" fill="none" stroke="#f5180d" stroke-width="2"/></svg>
<svg class="a" style="left:1064px;top:65px" width="845" height="833" viewBox="1064 65 845 833" font-family="Liberation Sans, sans-serif" fill="#fff"><defs><linearGradient id="glav" x1="0" x2="0" y1="0" y2="1"><stop offset="0" stop-color="#bebee0"/><stop offset="0.45" stop-color="#9c9cc0"/><stop offset="1" stop-color="#6a6a88"/></linearGradient><radialGradient id="gblk" cx="0.5" cy="0.42" r="0.6"><stop offset="0" stop-color="#343434"/><stop offset="0.6" stop-color="#222"/><stop offset="1" stop-color="#0a0a0a"/></radialGradient><radialGradient id="gwht" cx="0.5" cy="0.44" r="0.56"><stop offset="0" stop-color="#ffffff"/><stop offset="0.62" stop-color="#fafafa"/><stop offset="0.84" stop-color="#a8a8a8"/><stop offset="1" stop-color="#4a4a4a"/></radialGradient><radialGradient id="gled" cx="0.5" cy="0.42" r="0.58"><stop offset="0" stop-color="#93a672"/><stop offset="0.5" stop-color="#879a6c"/><stop offset="0.8" stop-color="#5a6c62"/><stop offset="1" stop-color="#2c3a78"/></radialGradient><radialGradient id="gor" cx="0.5" cy="0.5" r="0.6"><stop offset="0" stop-color="#ffb408"/><stop offset="0.6" stop-color="#f39a06"/><stop offset="1" stop-color="#8a5606"/></radialGradient><radialGradient id="gbz" cx="0.45" cy="0.4" r="0.7"><stop offset="0" stop-color="#525252"/><stop offset="0.75" stop-color="#484848"/><stop offset="1" stop-color="#3a3a3a"/></radialGradient></defs><rect x="1064" y="65" width="845" height="833" fill="url(#glav)"/><rect x="1084" y="71" width="806" height="823" fill="#0a0a0a"/><rect x="1084" y="72.5" width="806" height="821.5" fill="#186a34"/><path d="M1084 72.5 L1890 72.5 L1890 112 Q1888 127 1872 128 L1752 128 Q1732 130 1731 148 L1731 874 Q1731 887 1718 887 L1258 887 Q1245 887 1245 874 L1245 148 Q1244 130 1226 128 L1102 128 Q1086 127 1084 112 Z" fill="#2b7b3b"/><g fill="none" stroke="#1b6933" stroke-width="2.7" stroke-linejoin="round" stroke-linecap="round"><polyline points="1376,279 1353,297 1287,298 1270,315 1270,346"/><polyline points="1597,279 1620,297 1686,298 1703,315 1703,346"/><polyline points="1381,283 1359,304 1290,305 1277,319 1277,346"/><polyline points="1592,283 1614,304 1683,305 1696,319 1696,346"/><polyline points="1357,311 1292,312 1283,322 1283,346"/><polyline points="1616,311 1681,312 1690,322 1690,346"/><polyline points="1378,281 1414,314 1414,320"/><polyline points="1595,281 1559,314 1559,320"/><polyline points="1388,277 1429,322 1429,464"/><polyline points="1585,277 1544,322 1544,464"/><polyline points="1421,287 1437,303 1437,464"/><polyline points="1552,287 1536,303 1536,464"/><polyline points="1433,226 1433,300"/><polyline points="1540,226 1540,300"/><polyline points="1443,226 1443,464"/><polyline points="1530,226 1530,464"/><polyline points="1450,226 1450,286"/><polyline points="1523,226 1523,286"/><polyline points="1447,402 1468,423 1468,464"/><polyline points="1526,402 1505,423 1505,464"/><polyline points="1376,357 1400,357"/><polyline points="1597,357 1573,357"/><polyline points="1376,367 1400,367"/><polyline points="1597,367 1573,367"/><polyline points="1376,377 1400,377"/><polyline points="1597,377 1573,377"/><polyline points="1376,387 1400,387"/><polyline points="1597,387 1573,387"/><polyline points="1296,357 1318,357"/><polyline points="1677,357 1655,357"/><polyline points="1296,367 1308,367 1312,372 1318,372"/><polyline points="1677,367 1665,367 1661,372 1655,372"/><polyline points="1296,383 1306,383 1312,377 1318,377"/><polyline points="1677,383 1667,383 1661,377 1655,377"/><polyline points="1316,390 1366,439 1419,439 1419,426"/><polyline points="1657,390 1607,439 1554,439 1554,426"/><polyline points="1330,392 1341,403 1341,420 1352,431 1408,431"/><polyline points="1643,392 1632,403 1632,420 1621,431 1565,431"/><polyline points="1311.6,161.3 1298.8,161.3 1298.8,211.2 1312.5,225 1345.5,225"/><polyline points="1661.4,161.3 1674.2,161.3 1674.2,211.2 1660.5,225 1627.5,225"/><polyline points="1304.3,172.7 1304.3,205.7 1315.3,216.7 1340,216.7"/><polyline points="1668.7,172.7 1668.7,205.7 1657.7,216.7 1633,216.7"/><polyline points="1311.6,171.6 1306,171.6"/><polyline points="1661.4,171.6 1667,171.6"/><polyline points="1369.4,150.7 1376.7,150.7 1384,143.3 1384,128"/><polyline points="1603.6,150.7 1596.3,150.7 1589,143.3 1589,128"/><polyline points="1369.4,161.3 1378.5,161.3 1386.8,152.5 1386.8,134"/><polyline points="1603.6,161.3 1594.5,161.3 1586.2,152.5 1586.2,134"/><polyline points="1369.4,181.9 1376.7,187.4 1387.7,198.4 1387.7,300"/><polyline points="1603.6,181.9 1596.3,187.4 1585.3,198.4 1585.3,300"/><polyline points="1384,227.7 1384,262"/><polyline points="1589,227.7 1589,262"/><polyline points="1318,196 1314,202 1318,210 1325,212"/><polyline points="1655,196 1659,202 1655,210 1648,212"/><polyline points="1364,192 1372,200 1380,200"/><polyline points="1609,192 1601,200 1593,200"/><polyline points="1389,236 1389,270"/><polyline points="1584,236 1584,270"/><polyline points="1438,236 1438,270"/><polyline points="1535,236 1535,270"/><polyline points="1347,253 1347,262 1352,266"/><polyline points="1626,253 1626,262 1621,266"/><polyline points="1226,130 1226,120"/><polyline points="1747,130 1747,120"/><polyline points="1290,131 1300,121"/><polyline points="1683,131 1673,121"/><polyline points="1347,120 1347,131 1352,136"/><polyline points="1626,120 1626,131 1621,136"/><polyline points="1380,120 1380,134"/><polyline points="1593,120 1593,134"/><polyline points="1416,118 1416,130 1436,150 1436,226"/><polyline points="1557,118 1557,130 1537,150 1537,226"/><polyline points="1429,664 1429,730 1420,739"/><polyline points="1544,664 1544,730 1553,739"/><polyline points="1437,664 1437,736"/><polyline points="1536,664 1536,736"/><polyline points="1443,664 1443,700"/><polyline points="1530,664 1530,700"/><polyline points="1262,664 1262,690 1270,698 1270,760"/><polyline points="1711,664 1711,690 1703,698 1703,760"/><polyline points="1268,664 1268,686 1277,695 1277,760"/><polyline points="1705,664 1705,686 1696,695 1696,760"/><polyline points="1376,773 1400,773"/><polyline points="1597,773 1573,773"/><polyline points="1376,783 1400,783"/><polyline points="1597,783 1573,783"/><polyline points="1376,793 1400,793"/><polyline points="1597,793 1573,793"/><polyline points="1376,803 1400,803"/><polyline points="1597,803 1573,803"/><polyline points="1296,773 1318,773"/><polyline points="1677,773 1655,773"/><polyline points="1296,788 1318,788"/><polyline points="1677,788 1655,788"/><polyline points="1296,803 1318,803"/><polyline points="1677,803 1655,803"/><polyline points="1388,695 1388,730 1398,740 1406,740"/><polyline points="1585,695 1585,730 1575,740 1567,740"/><polyline points="1340,695 1332,703 1332,740 1340,748"/><polyline points="1633,695 1641,703 1641,740 1633,748"/><polyline points="1316,806 1340,830 1340,850 1348,858"/><polyline points="1657,806 1633,830 1633,850 1625,858"/><polyline points="1392,858 1392,838 1402,830"/><polyline points="1581,858 1581,838 1571,830"/></g><g fill="#101c14"><circle cx="1255" cy="138" r="1.1"/><circle cx="1718" cy="138" r="1.1"/><circle cx="1300" cy="177" r="1.1"/><circle cx="1673" cy="177" r="1.1"/><circle cx="1319" cy="193" r="1.1"/><circle cx="1654" cy="193" r="1.1"/><circle cx="1323" cy="205" r="1.1"/><circle cx="1650" cy="205" r="1.1"/><circle cx="1372" cy="195" r="1.1"/><circle cx="1601" cy="195" r="1.1"/><circle cx="1378" cy="183" r="1.1"/><circle cx="1595" cy="183" r="1.1"/><circle cx="1391" cy="257" r="1.1"/><circle cx="1582" cy="257" r="1.1"/><circle cx="1320" cy="271" r="1.1"/><circle cx="1653" cy="271" r="1.1"/><circle cx="1387" cy="311" r="1.1"/><circle cx="1586" cy="311" r="1.1"/><circle cx="1297" cy="331" r="1.1"/><circle cx="1676" cy="331" r="1.1"/><circle cx="1329" cy="336" r="1.1"/><circle cx="1644" cy="336" r="1.1"/><circle cx="1355" cy="328" r="1.1"/><circle cx="1618" cy="328" r="1.1"/><circle cx="1388" cy="336" r="1.1"/><circle cx="1585" cy="336" r="1.1"/><circle cx="1390" cy="405" r="1.1"/><circle cx="1583" cy="405" r="1.1"/><circle cx="1390" cy="418" r="1.1"/><circle cx="1583" cy="418" r="1.1"/><circle cx="1412" cy="442" r="1.1"/><circle cx="1561" cy="442" r="1.1"/><circle cx="1453" cy="425" r="1.1"/><circle cx="1520" cy="425" r="1.1"/><circle cx="1260" cy="655" r="1.1"/><circle cx="1713" cy="655" r="1.1"/></g><circle cx="1174.5" cy="101.8" r="26.3" fill="none" stroke="#fff" stroke-width="1.2"/><circle cx="1174.5" cy="101.8" r="23.6" fill="#fff"/><circle cx="1174.5" cy="101.2" r="20.2" fill="#1c1c1c"/><circle cx="1120.5" cy="104.5" r="20" fill="#2c2c2c"/><circle cx="1111.4" cy="95.6" r="23.6" fill="url(#gblk)"/><circle cx="1165.5" cy="88.6" r="19.9" fill="url(#gwht)"/><path d="M1159 70.500 L1164.500 74 M1160 74.500 L1163.500 69.500" stroke="#ff10e8" stroke-width="1.7"/><rect x="1205.1" y="86.6" width="18.2" height="29.6" fill="none" stroke="#fff" stroke-width="1.5"/><rect x="1206.6" y="88.1" width="15.2" height="11.6" fill="#9c9c94" stroke="#b8b070" stroke-width="0.6"/><rect x="1206.6" y="103.1" width="15.2" height="11.6" fill="#9c9c94" stroke="#b8b070" stroke-width="0.6"/><rect x="1209" y="92.3" width="10.4" height="17.4" fill="#fbfbfb"/><rect x="1209" y="97.1" width="10.4" height="8.4" fill="#4a4a4a"/><rect x="1228.4" y="86.6" width="18.2" height="29.6" fill="none" stroke="#fff" stroke-width="1.5"/><rect x="1229.9" y="88.1" width="15.2" height="11.6" fill="#9c9c94" stroke="#b8b070" stroke-width="0.6"/><rect x="1229.9" y="103.1" width="15.2" height="11.6" fill="#9c9c94" stroke="#b8b070" stroke-width="0.6"/><rect x="1232.3" y="92.3" width="10.4" height="17.4" fill="#fbfbfb"/><rect x="1232.3" y="97.1" width="10.4" height="8.4" fill="#4a4a4a"/><rect x="1305.4" y="86.6" width="18.2" height="29.6" fill="none" stroke="#fff" stroke-width="1.5"/><rect x="1306.9" y="88.1" width="15.2" height="11.6" fill="#9c9c94" stroke="#b8b070" stroke-width="0.6"/><rect x="1306.9" y="103.1" width="15.2" height="11.6" fill="#9c9c94" stroke="#b8b070" stroke-width="0.6"/><rect x="1309.3" y="92.3" width="10.4" height="17.4" fill="#fbfbfb"/><rect x="1309.3" y="97.1" width="10.4" height="8.4" fill="#4a4a4a"/><rect x="1407.2" y="86.6" width="18.2" height="29.6" fill="none" stroke="#fff" stroke-width="1.5"/><rect x="1408.7" y="88.1" width="15.2" height="11.6" fill="#9c9c94" stroke="#b8b070" stroke-width="0.6"/><rect x="1408.7" y="103.1" width="15.2" height="11.6" fill="#9c9c94" stroke="#b8b070" stroke-width="0.6"/><rect x="1411.1" y="92.3" width="10.4" height="17.4" fill="#fbfbfb"/><rect x="1411.1" y="97.1" width="10.4" height="8.4" fill="#4a4a4a"/><rect x="1545.9" y="86.6" width="18.2" height="29.6" fill="none" stroke="#fff" stroke-width="1.5"/><rect x="1547.4" y="88.1" width="15.2" height="11.6" fill="#9c9c94" stroke="#b8b070" stroke-width="0.6"/><rect x="1547.4" y="103.1" width="15.2" height="11.6" fill="#9c9c94" stroke="#b8b070" stroke-width="0.6"/><rect x="1549.8" y="92.3" width="10.4" height="17.4" fill="#fbfbfb"/><rect x="1549.8" y="97.1" width="10.4" height="8.4" fill="#4a4a4a"/><rect x="1649.2" y="86.6" width="18.2" height="29.6" fill="none" stroke="#fff" stroke-width="1.5"/><rect x="1650.7" y="88.1" width="15.2" height="11.6" fill="#9c9c94" stroke="#b8b070" stroke-width="0.6"/><rect x="1650.7" y="103.1" width="15.2" height="11.6" fill="#9c9c94" stroke="#b8b070" stroke-width="0.6"/><rect x="1653.1" y="92.3" width="10.4" height="17.4" fill="#fbfbfb"/><rect x="1653.1" y="97.1" width="10.4" height="8.4" fill="#4a4a4a"/><rect x="1724.5" y="86.6" width="18.2" height="29.6" fill="none" stroke="#fff" stroke-width="1.5"/><rect x="1726" y="88.1" width="15.2" height="11.6" fill="#9c9c94" stroke="#b8b070" stroke-width="0.6"/><rect x="1726" y="103.1" width="15.2" height="11.6" fill="#9c9c94" stroke="#b8b070" stroke-width="0.6"/><rect x="1728.4" y="92.3" width="10.4" height="17.4" fill="#fbfbfb"/><rect x="1728.4" y="97.1" width="10.4" height="8.4" fill="#4a4a4a"/><rect x="1749.3" y="86.6" width="18.2" height="29.6" fill="none" stroke="#fff" stroke-width="1.5"/><rect x="1750.8" y="88.1" width="15.2" height="11.6" fill="#9c9c94" stroke="#b8b070" stroke-width="0.6"/><rect x="1750.8" y="103.1" width="15.2" height="11.6" fill="#9c9c94" stroke="#b8b070" stroke-width="0.6"/><rect x="1753.2" y="92.3" width="10.4" height="17.4" fill="#fbfbfb"/><rect x="1753.2" y="97.1" width="10.4" height="8.4" fill="#4a4a4a"/><circle cx="1347" cy="90.4" r="9" fill="#1f6f36"/><circle cx="1347" cy="90.4" r="6.7" fill="#8e8e88" stroke="#a89c64" stroke-width="0.7"/><circle cx="1346.7" cy="91" r="4.6" fill="#1a1a1a"/><rect x="1346.4" y="85" width="3.8" height="3.8" fill="#f8f8f8"/><circle cx="1347" cy="111.1" r="9" fill="#1f6f36"/><circle cx="1347" cy="111.1" r="6.7" fill="#8e8e88" stroke="#a89c64" stroke-width="0.7"/><circle cx="1346.7" cy="111.7" r="4.6" fill="#1a1a1a"/><rect x="1346.4" y="105.7" width="3.8" height="3.8" fill="#f8f8f8"/><circle cx="1380.5" cy="90.4" r="9" fill="#1f6f36"/><circle cx="1380.5" cy="90.4" r="6.7" fill="#8e8e88" stroke="#a89c64" stroke-width="0.7"/><circle cx="1380.2" cy="91" r="4.6" fill="#1a1a1a"/><rect x="1379.9" y="85" width="3.8" height="3.8" fill="#f8f8f8"/><circle cx="1380.5" cy="111.1" r="9" fill="#1f6f36"/><circle cx="1380.5" cy="111.1" r="6.7" fill="#8e8e88" stroke="#a89c64" stroke-width="0.7"/><circle cx="1380.2" cy="111.7" r="4.6" fill="#1a1a1a"/><rect x="1379.9" y="105.7" width="3.8" height="3.8" fill="#f8f8f8"/><circle cx="1593" cy="90.4" r="9" fill="#1f6f36"/><circle cx="1593" cy="90.4" r="6.7" fill="#8e8e88" stroke="#a89c64" stroke-width="0.7"/><circle cx="1592.7" cy="91" r="4.6" fill="#1a1a1a"/><rect x="1592.4" y="85" width="3.8" height="3.8" fill="#f8f8f8"/><circle cx="1593" cy="111.1" r="9" fill="#1f6f36"/><circle cx="1593" cy="111.1" r="6.7" fill="#8e8e88" stroke="#a89c64" stroke-width="0.7"/><circle cx="1592.7" cy="111.7" r="4.6" fill="#1a1a1a"/><rect x="1592.4" y="105.7" width="3.8" height="3.8" fill="#f8f8f8"/><circle cx="1627" cy="90.4" r="9" fill="#1f6f36"/><circle cx="1627" cy="90.4" r="6.7" fill="#8e8e88" stroke="#a89c64" stroke-width="0.7"/><circle cx="1626.7" cy="91" r="4.6" fill="#1a1a1a"/><rect x="1626.4" y="85" width="3.8" height="3.8" fill="#f8f8f8"/><circle cx="1627" cy="111.1" r="9" fill="#1f6f36"/><circle cx="1627" cy="111.1" r="6.7" fill="#8e8e88" stroke="#a89c64" stroke-width="0.7"/><circle cx="1626.7" cy="111.7" r="4.6" fill="#1a1a1a"/><rect x="1626.4" y="105.7" width="3.8" height="3.8" fill="#f8f8f8"/><circle cx="1458.5" cy="101.7" r="26.3" fill="none" stroke="#fff" stroke-width="1.2"/><circle cx="1458.5" cy="101.7" r="23.6" fill="#fff"/><circle cx="1458.5" cy="101.10000000000001" r="20.2" fill="#1c1c1c"/><circle cx="1458.5" cy="88.8" r="19.9" fill="url(#gwht)"/><ellipse cx="1515" cy="100" rx="22.3" ry="24.3" fill="#3a3a3a"/><ellipse cx="1515" cy="97.5" rx="22.3" ry="24" fill="url(#gblk)"/><circle cx="1798.4" cy="101.8" r="26.3" fill="none" stroke="#fff" stroke-width="1.2"/><circle cx="1798.4" cy="101.8" r="23.6" fill="#fff"/><circle cx="1798.4" cy="101.2" r="20.2" fill="#1c1c1c"/><circle cx="1852" cy="105.5" r="19" fill="#2c2c2c"/><circle cx="1862.5" cy="95" r="23.5" fill="url(#gblk)"/><circle cx="1808.4" cy="88.6" r="19.9" fill="url(#gwht)"/><path d="M1796 92.500 L1802 95.500 M1797.500 96.500 L1800.500 91.500" stroke="#ff10e8" stroke-width="1.7"/><circle cx="1274.2" cy="100.500" r="24.400" fill="#1a1a78" stroke="#b8b8fa" stroke-width="1.6"/><circle cx="1274.2" cy="100.500" r="21.400" fill="none" stroke="#a6a66a" stroke-width="3"/><circle cx="1274.2" cy="99.500" r="19.800" fill="#181878"/><path d="M1298.0 65.300 L1302.5 70 L1302.5 125.600 L1298.0 125.600 Z" fill="#3a4cb4" fill-opacity="0.8"/><rect x="1235.3" y="65.300" width="62.7" height="10" fill="#4444b8" fill-opacity="0.86"/><rect x="1235.3" y="75.300" width="62.7" height="50.300" fill="#2020cc" fill-opacity="0.7"/><circle cx="1268.0" cy="92.300" r="20.400" fill="url(#gled)"/><circle cx="1268.3" cy="90" r="1.2" fill="#b88848"/><circle cx="1695.3" cy="100.500" r="24.400" fill="#1a1a78" stroke="#b8b8fa" stroke-width="1.6"/><circle cx="1695.3" cy="100.500" r="21.400" fill="none" stroke="#a6a66a" stroke-width="3"/><circle cx="1695.3" cy="99.500" r="19.800" fill="#181878"/><path d="M1673.1 65.300 L1667.6 71 L1667.6 125.600 L1673.1 125.600 Z" fill="#3a4cb4" fill-opacity="0.8"/><rect x="1673.1" y="65.300" width="61.8" height="10" fill="#4444b8" fill-opacity="0.86"/><rect x="1673.1" y="75.300" width="61.8" height="50.300" fill="#2020cc" fill-opacity="0.7"/><circle cx="1701.5" cy="92.300" r="20.400" fill="url(#gled)"/><circle cx="1701.8" cy="90" r="1.2" fill="#b88848"/><path d="M1236 89.400 L1247.800 89.400" stroke="#a414f4" stroke-width="3"/><path d="M1284.300 89.700 L1295.600 89.700 M1290 84 L1290 95.400" stroke="#a414f4" stroke-width="3"/><path d="M1722.300 89.200 L1733.600 89.200" stroke="#a414f4" stroke-width="3"/><path d="M1673.500 87.900 L1684.900 87.900 M1679.200 82.200 L1679.200 93.600" stroke="#a414f4" stroke-width="3"/><text x="1143" y="128" font-size="12" text-anchor="middle" textLength="26.8" lengthAdjust="spacingAndGlyphs" stroke="#fff" stroke-width="0.45">CGQ1</text><text x="1201" y="128" font-size="12" text-anchor="middle" textLength="14.6" lengthAdjust="spacingAndGlyphs" stroke="#fff" stroke-width="0.45">IR1</text><text x="1220" y="128" font-size="12" text-anchor="middle" textLength="15.2" lengthAdjust="spacingAndGlyphs" stroke="#fff" stroke-width="0.45">R8</text><text x="1238.7" y="128" font-size="12" text-anchor="middle" textLength="15.2" lengthAdjust="spacingAndGlyphs" stroke="#fff" stroke-width="0.45">R9</text><text x="1314.5" y="128" font-size="12" text-anchor="middle" textLength="19.2" lengthAdjust="spacingAndGlyphs" stroke="#fff" stroke-width="0.45">R12</text><text x="1417.5" y="128" font-size="12" text-anchor="middle" textLength="22.8" lengthAdjust="spacingAndGlyphs" stroke="#fff" stroke-width="0.45">R40</text><text x="1553.7" y="128" font-size="12" text-anchor="middle" textLength="19.2" lengthAdjust="spacingAndGlyphs" stroke="#fff" stroke-width="0.45">R41</text><text x="1657.5" y="128" font-size="12" text-anchor="middle" textLength="19.2" lengthAdjust="spacingAndGlyphs" stroke="#fff" stroke-width="0.45">R14</text><text x="1728.2" y="128" font-size="12" text-anchor="middle" textLength="22.8" lengthAdjust="spacingAndGlyphs" stroke="#fff" stroke-width="0.45">R23</text><text x="1751" y="128" font-size="12" text-anchor="middle" textLength="22.8" lengthAdjust="spacingAndGlyphs" stroke="#fff" stroke-width="0.45">R22</text><text x="1773.5" y="128" font-size="12" text-anchor="middle" textLength="18.2" lengthAdjust="spacingAndGlyphs" stroke="#fff" stroke-width="0.45">IR2</text><text x="1832" y="128" font-size="12" text-anchor="middle" textLength="30.4" lengthAdjust="spacingAndGlyphs" stroke="#fff" stroke-width="0.45">CGQ2</text><text x="1458" y="138.2" font-size="12" text-anchor="middle" textLength="18.2" lengthAdjust="spacingAndGlyphs" stroke="#fff" stroke-width="0.45">IR3</text><text x="1517" y="138.2" font-size="12" text-anchor="middle" textLength="30.4" lengthAdjust="spacingAndGlyphs" stroke="#fff" stroke-width="0.45">CGQ3</text><text x="1272" y="138" font-size="12" text-anchor="middle" textLength="30.4" lengthAdjust="spacingAndGlyphs" stroke="#fff" stroke-width="0.45">LED4</text><text x="1695" y="138" font-size="12" text-anchor="middle" textLength="30.4" lengthAdjust="spacingAndGlyphs" stroke="#fff" stroke-width="0.45">LED5</text><path d="M1252 222 L1294.7 222" stroke="#fff" stroke-width="1.3"/><path d="M1245 212.5 L1286.6 212.5 L1286.6 221.3 L1252.5 221.3 Z" fill="#040d26"/><rect x="1245" y="132" width="41.6" height="7.5" fill="#0b4ab4"/><rect x="1245" y="132" width="35" height="81" fill="#0b4ab4"/><rect x="1280" y="139" width="6.6" height="67" fill="#040d26"/><rect x="1280" y="206" width="6.6" height="7" fill="#0b4ab4"/><rect x="1286.6" y="143.3" width="6.6" height="5.6" fill="#0b4ab4"/><rect x="1293.2" y="143.3" width="1.6" height="5.6" fill="#fff"/><rect x="1286.6" y="148.9" width="5.6" height="1.4" fill="#061030"/><rect x="1288.9" y="150.3" width="2.3" height="65" fill="#fff"/><rect x="1286.6" y="215" width="6.6" height="6.2" fill="#0b4ab4"/><rect x="1293.2" y="217" width="1.6" height="5" fill="#fff"/><circle cx="1255.9" cy="201.4" r="9.4" fill="#9a7c10"/><circle cx="1255.4" cy="200.7" r="9.2" fill="#fbdc1c"/><path d="M1249.4 206.2 L1258.9 193.7" stroke="#3a3208" stroke-width="1.1"/><path d="M1397 222 L1435.5 222" stroke="#fff" stroke-width="1.3"/><path d="M1390 212.5 L1428 212.5 L1428 221.3 L1397.5 221.3 Z" fill="#040d26"/><rect x="1390" y="132" width="41" height="7.5" fill="#0b4ab4"/><rect x="1390" y="132" width="35.3" height="81" fill="#0b4ab4"/><rect x="1425.3" y="139" width="2.7" height="67" fill="#040d26"/><rect x="1425.3" y="206" width="2.7" height="7" fill="#0b4ab4"/><rect x="1428" y="143.3" width="6" height="5.6" fill="#0b4ab4"/><rect x="1434" y="143.3" width="1.6" height="5.6" fill="#fff"/><rect x="1428" y="148.9" width="5" height="1.4" fill="#061030"/><rect x="1428.5" y="150.3" width="2.3" height="65" fill="#fff"/><rect x="1428" y="215" width="6" height="6.2" fill="#0b4ab4"/><rect x="1434" y="217" width="1.6" height="5" fill="#fff"/><circle cx="1400.9" cy="201.4" r="9.4" fill="#9a7c10"/><circle cx="1400.4" cy="200.7" r="9.2" fill="#fbdc1c"/><path d="M1394.4 206.2 L1403.9 193.7" stroke="#3a3208" stroke-width="1.1"/><path d="M1541 132.8 L1541 222 L1581.5 222" fill="none" stroke="#fff" stroke-width="1.4"/><rect x="1541.7" y="141" width="1.1" height="72" fill="#040d26"/><path d="M1541.7 212.5 L1577.5 212.5 L1574 221.3 L1541.7 221.3 Z" fill="#040d26"/><path d="M1574 221.3 L1576.4 215.6 L1581.4 215.6 L1581.4 221.3 Z" fill="#0b4ab4"/><rect x="1542.8" y="132" width="35.2" height="81" fill="#0b4ab4"/><rect x="1578" y="132" width="6" height="7.4" fill="#0b4ab4"/><rect x="1578" y="139.4" width="6" height="1" fill="#061030"/><rect x="1578" y="143.3" width="3.8" height="5.6" fill="#0b4ab4"/><rect x="1581.8" y="143.3" width="1" height="5.6" fill="#fff"/><rect x="1578" y="148.9" width="3.4" height="1.8" fill="#061030"/><rect x="1578" y="206" width="6" height="6.8" fill="#0b4ab4"/><circle cx="1554.9" cy="201.4" r="9.4" fill="#9a7c10"/><circle cx="1554.4" cy="200.7" r="9.2" fill="#fbdc1c"/><path d="M1548.4 206.2 L1557.9 193.7" stroke="#3a3208" stroke-width="1.1"/><path d="M1679.8 143.3 L1679.8 222 L1721.6 222" fill="none" stroke="#fff" stroke-width="1.4"/><path d="M1680.5 143.3 L1687.9 133.5 L1687.9 213 L1680.5 213 Z" fill="#040d26"/><path d="M1680.5 212.5 L1722.6 212.5 L1719.1 221.3 L1680.5 221.3 Z" fill="#040d26"/><path d="M1719.1 221.3 L1721.5 215.6 L1726.5 215.6 L1726.5 221.3 Z" fill="#0b4ab4"/><rect x="1687.9" y="132" width="35.2" height="81" fill="#0b4ab4"/><rect x="1723.1" y="132" width="6.1" height="7.4" fill="#0b4ab4"/><rect x="1723.1" y="139.4" width="6.1" height="1" fill="#061030"/><rect x="1723.1" y="206" width="6.1" height="6.8" fill="#0b4ab4"/><circle cx="1700" cy="201.4" r="9.4" fill="#9a7c10"/><circle cx="1699.5" cy="200.7" r="9.2" fill="#fbdc1c"/><circle cx="1470" cy="143.8" r="9" fill="#1f6f36"/><circle cx="1470" cy="143.8" r="6.7" fill="#8e8e88" stroke="#a89c64" stroke-width="0.7"/><circle cx="1469.7" cy="144.4" r="4.6" fill="#1a1a1a"/><rect x="1469.4" y="138.4" width="3.8" height="3.8" fill="#f8f8f8"/><circle cx="1503.7" cy="143.8" r="9" fill="#1f6f36"/><circle cx="1503.7" cy="143.8" r="6.7" fill="#8e8e88" stroke="#a89c64" stroke-width="0.7"/><circle cx="1503.4" cy="144.4" r="4.6" fill="#1a1a1a"/><rect x="1503.1" y="138.4" width="3.8" height="3.8" fill="#f8f8f8"/><circle cx="1470" cy="164.7" r="9" fill="#1f6f36"/><circle cx="1470" cy="164.7" r="6.7" fill="#8e8e88" stroke="#a89c64" stroke-width="0.7"/><circle cx="1469.7" cy="165.3" r="4.6" fill="#1a1a1a"/><rect x="1469.4" y="159.3" width="3.8" height="3.8" fill="#f8f8f8"/><circle cx="1503.7" cy="164.7" r="9" fill="#1f6f36"/><circle cx="1503.7" cy="164.7" r="6.7" fill="#8e8e88" stroke="#a89c64" stroke-width="0.7"/><circle cx="1503.4" cy="165.3" r="4.6" fill="#1a1a1a"/><rect x="1503.1" y="159.3" width="3.8" height="3.8" fill="#f8f8f8"/><path d="M1447 211.1 L1447 216.4 L1526.8 216.4 L1526.8 211.1" fill="none" stroke="#fff" stroke-width="1.5"/><rect x="1447" y="170.8" width="79.8" height="35.2" fill="#0b4ab4"/><rect x="1447" y="165" width="6" height="6.3" fill="#0b4ab4"/><rect x="1520.8" y="165" width="6" height="6.3" fill="#0b4ab4"/><rect x="1447" y="206" width="79.8" height="9.6" fill="#040d26"/><path d="M1478 210.4 L1486 210.4" stroke="#8a8a9a" stroke-width="1"/><circle cx="1517.1" cy="194.6" r="9.4" fill="#9a7c10"/><circle cx="1516.6" cy="193.9" r="9.2" fill="#fbdc1c"/><path d="M1510.6 187.9 L1524.6 197.4" stroke="#3a3208" stroke-width="1"/><text x="1341" y="143" font-size="12" text-anchor="middle" textLength="15.2" lengthAdjust="spacingAndGlyphs" stroke="#fff" stroke-width="0.45">U2</text><text x="1633" y="143" font-size="12" text-anchor="middle" textLength="15.2" lengthAdjust="spacingAndGlyphs" stroke="#fff" stroke-width="0.45">U4</text><rect x="1311" y="147.9" width="14" height="5.2" rx="2.4" fill="#b4b4a4"/><rect x="1355" y="147.9" width="14" height="5.2" rx="2.4" fill="#b4b4a4"/><rect x="1318" y="148.9" width="5" height="3.2" fill="#e8e8e0"/><rect x="1357" y="148.9" width="5" height="3.2" fill="#e8e8e0"/><rect x="1311" y="157.9" width="14" height="5.2" rx="2.4" fill="#b4b4a4"/><rect x="1355" y="157.9" width="14" height="5.2" rx="2.4" fill="#b4b4a4"/><rect x="1318" y="158.9" width="5" height="3.2" fill="#e8e8e0"/><rect x="1357" y="158.9" width="5" height="3.2" fill="#e8e8e0"/><rect x="1311" y="167.9" width="14" height="5.2" rx="2.4" fill="#b4b4a4"/><rect x="1355" y="167.9" width="14" height="5.2" rx="2.4" fill="#b4b4a4"/><rect x="1318" y="168.9" width="5" height="3.2" fill="#e8e8e0"/><rect x="1357" y="168.9" width="5" height="3.2" fill="#e8e8e0"/><rect x="1311" y="177.9" width="14" height="5.2" rx="2.4" fill="#b4b4a4"/><rect x="1355" y="177.9" width="14" height="5.2" rx="2.4" fill="#b4b4a4"/><rect x="1318" y="178.9" width="5" height="3.2" fill="#e8e8e0"/><rect x="1357" y="178.9" width="5" height="3.2" fill="#e8e8e0"/><rect x="1323.5" y="145" width="33" height="41" fill="none" stroke="#fff" stroke-width="1.3"/><rect x="1324.5" y="146" width="31" height="39" fill="#3c3c3c"/><rect x="1338" y="160.5" width="3.2" height="10" fill="#6a6a6a"/><circle cx="1367" cy="181.5" r="2.4" fill="#ff10e8"/><circle cx="1361" cy="190.5" r="1.8" fill="#fff"/><rect x="1605" y="147.9" width="14" height="5.2" rx="2.4" fill="#b4b4a4"/><rect x="1649" y="147.9" width="14" height="5.2" rx="2.4" fill="#b4b4a4"/><rect x="1612" y="148.9" width="5" height="3.2" fill="#e8e8e0"/><rect x="1651" y="148.9" width="5" height="3.2" fill="#e8e8e0"/><rect x="1605" y="157.9" width="14" height="5.2" rx="2.4" fill="#b4b4a4"/><rect x="1649" y="157.9" width="14" height="5.2" rx="2.4" fill="#b4b4a4"/><rect x="1612" y="158.9" width="5" height="3.2" fill="#e8e8e0"/><rect x="1651" y="158.9" width="5" height="3.2" fill="#e8e8e0"/><rect x="1605" y="167.9" width="14" height="5.2" rx="2.4" fill="#b4b4a4"/><rect x="1649" y="167.9" width="14" height="5.2" rx="2.4" fill="#b4b4a4"/><rect x="1612" y="168.9" width="5" height="3.2" fill="#e8e8e0"/><rect x="1651" y="168.9" width="5" height="3.2" fill="#e8e8e0"/><rect x="1605" y="177.9" width="14" height="5.2" rx="2.4" fill="#b4b4a4"/><rect x="1649" y="177.9" width="14" height="5.2" rx="2.4" fill="#b4b4a4"/><rect x="1612" y="178.9" width="5" height="3.2" fill="#e8e8e0"/><rect x="1651" y="178.9" width="5" height="3.2" fill="#e8e8e0"/><rect x="1617.5" y="145" width="33" height="41" fill="none" stroke="#fff" stroke-width="1.3"/><rect x="1618.5" y="146" width="31" height="39" fill="#3c3c3c"/><rect x="1632" y="160.5" width="3.2" height="10" fill="#6a6a6a"/><circle cx="1661" cy="181.5" r="2.4" fill="#ff10e8"/><circle cx="1655" cy="190.5" r="1.8" fill="#fff"/><path d="M1337.5 195 L1328.6 195 Q1326.1 195 1326.1 197.5 L1326.1 209.5 Q1326.1 212 1328.6 212 L1337.5 212" fill="none" stroke="#fff" stroke-width="2"/><path d="M1343.5 195 L1352.4 195 Q1354.9 195 1354.9 197.5 L1354.9 209.5 Q1354.9 212 1352.4 212 L1343.5 212" fill="none" stroke="#fff" stroke-width="2"/><rect x="1327.9" y="196.3" width="10" height="13.6" fill="#a2a2a0"/><rect x="1343.5" y="196.3" width="10" height="13.6" fill="#a2a2a0"/><rect x="1332.3" y="198.5" width="17" height="10.6" fill="#fdfdfd"/><rect x="1335.9" y="198.7" width="9.2" height="10.4" fill="#c4960c"/><path d="M1630.4 195 L1621.5 195 Q1619 195 1619 197.5 L1619 209.5 Q1619 212 1621.5 212 L1630.4 212" fill="none" stroke="#fff" stroke-width="2"/><path d="M1636.4 195 L1645.3 195 Q1647.8 195 1647.8 197.5 L1647.8 209.5 Q1647.8 212 1645.3 212 L1636.4 212" fill="none" stroke="#fff" stroke-width="2"/><rect x="1620.8" y="196.3" width="10" height="13.6" fill="#a2a2a0"/><rect x="1636.4" y="196.3" width="10" height="13.6" fill="#a2a2a0"/><rect x="1625.2" y="198.5" width="17" height="10.6" fill="#fdfdfd"/><rect x="1628.8" y="198.7" width="9.2" height="10.4" fill="#c4960c"/><text x="1272" y="234" font-size="12" text-anchor="middle" textLength="15.6" lengthAdjust="spacingAndGlyphs" stroke="#fff" stroke-width="0.45">R11</text><text x="1334" y="223" font-size="12" text-anchor="middle" textLength="15.2" lengthAdjust="spacingAndGlyphs" stroke="#fff" stroke-width="0.45">C3</text><text x="1642" y="223" font-size="12" text-anchor="middle" textLength="15.2" lengthAdjust="spacingAndGlyphs" stroke="#fff" stroke-width="0.45">C4</text><text x="1691" y="234" font-size="12" text-anchor="middle" textLength="22.8" lengthAdjust="spacingAndGlyphs" stroke="#fff" stroke-width="0.45">R25</text><text x="1365" y="230" font-size="12" text-anchor="middle" textLength="30.4" lengthAdjust="spacingAndGlyphs" stroke="#fff" stroke-width="0.45">LED3</text><path d="M1350 231.5 L1378 231.5 Q1382 231.5 1382 235.5 L1382 245.5 Q1382 249.5 1378 249.5 L1350 249.5 Q1346 249.5 1346 245.5 L1346 235.5 Q1346 231.5 1350 231.5Z" fill="none" stroke="#fff" stroke-width="1.8"/><rect x="1349" y="234" width="12" height="13" fill="#b4b4a4"/><rect x="1367" y="234" width="12" height="13" fill="#b4b4a4"/><rect x="1354.5" y="235.5" width="2.6" height="10" fill="#f2e11c"/><rect x="1371" y="235.5" width="2.6" height="10" fill="#f2e11c"/><rect x="1357.5" y="235.9" width="13" height="9.2" fill="#fbfbfb"/><path d="M1350 240.5 L1358 240.5 M1354 236.5 L1354 244.5" stroke="#ff10e8" stroke-width="1.5"/><path d="M1369.5 240.5 L1378.5 240.5" stroke="#ff10e8" stroke-width="1.5"/><text x="1414" y="230" font-size="12" text-anchor="middle" textLength="30.4" lengthAdjust="spacingAndGlyphs" stroke="#fff" stroke-width="0.45">LED2</text><path d="M1399 231.5 L1427 231.5 Q1431 231.5 1431 235.5 L1431 245.5 Q1431 249.5 1427 249.5 L1399 249.5 Q1395 249.5 1395 245.5 L1395 235.5 Q1395 231.5 1399 231.5Z" fill="none" stroke="#fff" stroke-width="1.8"/><rect x="1398" y="234" width="12" height="13" fill="#b4b4a4"/><rect x="1416" y="234" width="12" height="13" fill="#b4b4a4"/><rect x="1403.5" y="235.5" width="2.6" height="10" fill="#f2e11c"/><rect x="1420" y="235.5" width="2.6" height="10" fill="#f2e11c"/><rect x="1406.5" y="235.9" width="13" height="9.2" fill="#fbfbfb"/><path d="M1419 240.5 L1427 240.5 M1423 236.5 L1423 244.5" stroke="#ff10e8" stroke-width="1.5"/><path d="M1398.5 240.5 L1407.5 240.5" stroke="#ff10e8" stroke-width="1.5"/><text x="1463" y="230" font-size="12" text-anchor="middle" textLength="30.4" lengthAdjust="spacingAndGlyphs" stroke="#fff" stroke-width="0.45">LED8</text><path d="M1448 231.5 L1476 231.5 Q1480 231.5 1480 235.5 L1480 245.5 Q1480 249.5 1476 249.5 L1448 249.5 Q1444 249.5 1444 245.5 L1444 235.5 Q1444 231.5 1448 231.5Z" fill="none" stroke="#fff" stroke-width="1.8"/><rect x="1447" y="234" width="12" height="13" fill="#b4b4a4"/><rect x="1465" y="234" width="12" height="13" fill="#b4b4a4"/><rect x="1452.5" y="235.5" width="2.6" height="10" fill="#f2e11c"/><rect x="1469" y="235.5" width="2.6" height="10" fill="#f2e11c"/><rect x="1455.5" y="235.9" width="13" height="9.2" fill="#fbfbfb"/><path d="M1468 240.5 L1476 240.5 M1472 236.5 L1472 244.5" stroke="#ff10e8" stroke-width="1.5"/><path d="M1447.5 240.5 L1456.5 240.5" stroke="#ff10e8" stroke-width="1.5"/><text x="1512" y="230" font-size="12" text-anchor="middle" textLength="30.4" lengthAdjust="spacingAndGlyphs" stroke="#fff" stroke-width="0.45">LED9</text><path d="M1497 231.5 L1525 231.5 Q1529 231.5 1529 235.5 L1529 245.5 Q1529 249.5 1525 249.5 L1497 249.5 Q1493 249.5 1493 245.5 L1493 235.5 Q1493 231.5 1497 231.5Z" fill="none" stroke="#fff" stroke-width="1.8"/><rect x="1496" y="234" width="12" height="13" fill="#b4b4a4"/><rect x="1514" y="234" width="12" height="13" fill="#b4b4a4"/><rect x="1501.5" y="235.5" width="2.6" height="10" fill="#f2e11c"/><rect x="1518" y="235.5" width="2.6" height="10" fill="#f2e11c"/><rect x="1504.5" y="235.9" width="13" height="9.2" fill="#fbfbfb"/><path d="M1497 240.5 L1505 240.5 M1501 236.5 L1501 244.5" stroke="#ff10e8" stroke-width="1.5"/><path d="M1516.5 240.5 L1525.5 240.5" stroke="#ff10e8" stroke-width="1.5"/><text x="1561" y="230" font-size="12" text-anchor="middle" textLength="30.4" lengthAdjust="spacingAndGlyphs" stroke="#fff" stroke-width="0.45">LED6</text><path d="M1546 231.5 L1574 231.5 Q1578 231.5 1578 235.5 L1578 245.5 Q1578 249.5 1574 249.5 L1546 249.5 Q1542 249.5 1542 245.5 L1542 235.5 Q1542 231.5 1546 231.5Z" fill="none" stroke="#fff" stroke-width="1.8"/><rect x="1545" y="234" width="12" height="13" fill="#b4b4a4"/><rect x="1563" y="234" width="12" height="13" fill="#b4b4a4"/><rect x="1550.5" y="235.5" width="2.6" height="10" fill="#f2e11c"/><rect x="1567" y="235.5" width="2.6" height="10" fill="#f2e11c"/><rect x="1553.5" y="235.9" width="13" height="9.2" fill="#fbfbfb"/><path d="M1546 240.5 L1554 240.5 M1550 236.5 L1550 244.5" stroke="#ff10e8" stroke-width="1.5"/><path d="M1565.5 240.5 L1574.5 240.5" stroke="#ff10e8" stroke-width="1.5"/><text x="1611" y="230" font-size="12" text-anchor="middle" textLength="30.4" lengthAdjust="spacingAndGlyphs" stroke="#fff" stroke-width="0.45">LED7</text><path d="M1596 231.5 L1624 231.5 Q1628 231.5 1628 235.5 L1628 245.5 Q1628 249.5 1624 249.5 L1596 249.5 Q1592 249.5 1592 245.5 L1592 235.5 Q1592 231.5 1596 231.5Z" fill="none" stroke="#fff" stroke-width="1.8"/><rect x="1595" y="234" width="12" height="13" fill="#b4b4a4"/><rect x="1613" y="234" width="12" height="13" fill="#b4b4a4"/><rect x="1600.5" y="235.5" width="2.6" height="10" fill="#f2e11c"/><rect x="1617" y="235.5" width="2.6" height="10" fill="#f2e11c"/><rect x="1603.5" y="235.9" width="13" height="9.2" fill="#fbfbfb"/><path d="M1616 240.5 L1624 240.5 M1620 236.5 L1620 244.5" stroke="#ff10e8" stroke-width="1.5"/><path d="M1595.5 240.5 L1604.5 240.5" stroke="#ff10e8" stroke-width="1.5"/><path d="M1361 256.5 L1349.6 256.5 L1349.6 273.5 L1361 273.5" fill="none" stroke="#fff" stroke-width="2"/><path d="M1367 256.5 L1378.4 256.5 L1378.4 273.5 L1367 273.5" fill="none" stroke="#fff" stroke-width="2"/><rect x="1351.4" y="257.8" width="10" height="13.6" fill="#a2a2a0"/><rect x="1367" y="257.8" width="10" height="13.6" fill="#a2a2a0"/><rect x="1355.4" y="259.2" width="17.6" height="11.4" fill="#fdfdfd"/><rect x="1358.7" y="259.5" width="10.8" height="10.8" fill="#4e4e4e"/><text x="1364" y="285" font-size="12" text-anchor="middle" textLength="15.2" lengthAdjust="spacingAndGlyphs" stroke="#fff" stroke-width="0.45">R5</text><path d="M1410 256.5 L1398.6 256.5 L1398.6 273.5 L1410 273.5" fill="none" stroke="#fff" stroke-width="2"/><path d="M1416 256.5 L1427.4 256.5 L1427.4 273.5 L1416 273.5" fill="none" stroke="#fff" stroke-width="2"/><rect x="1400.4" y="257.8" width="10" height="13.6" fill="#a2a2a0"/><rect x="1416" y="257.8" width="10" height="13.6" fill="#a2a2a0"/><rect x="1404.4" y="259.2" width="17.6" height="11.4" fill="#fdfdfd"/><rect x="1407.7" y="259.5" width="10.8" height="10.8" fill="#4e4e4e"/><text x="1413" y="285" font-size="12" text-anchor="middle" textLength="15.2" lengthAdjust="spacingAndGlyphs" stroke="#fff" stroke-width="0.45">R2</text><path d="M1459 256.5 L1447.6 256.5 L1447.6 273.5 L1459 273.5" fill="none" stroke="#fff" stroke-width="2"/><path d="M1465 256.5 L1476.4 256.5 L1476.4 273.5 L1465 273.5" fill="none" stroke="#fff" stroke-width="2"/><rect x="1449.4" y="257.8" width="10" height="13.6" fill="#a2a2a0"/><rect x="1465" y="257.8" width="10" height="13.6" fill="#a2a2a0"/><rect x="1453.4" y="259.2" width="17.6" height="11.4" fill="#fdfdfd"/><rect x="1456.7" y="259.5" width="10.8" height="10.8" fill="#4e4e4e"/><text x="1462" y="285" font-size="12" text-anchor="middle" textLength="19.2" lengthAdjust="spacingAndGlyphs" stroke="#fff" stroke-width="0.45">R31</text><path d="M1508 256.5 L1496.6 256.5 L1496.6 273.5 L1508 273.5" fill="none" stroke="#fff" stroke-width="2"/><path d="M1514 256.5 L1525.4 256.5 L1525.4 273.5 L1514 273.5" fill="none" stroke="#fff" stroke-width="2"/><rect x="1498.4" y="257.8" width="10" height="13.6" fill="#a2a2a0"/><rect x="1514" y="257.8" width="10" height="13.6" fill="#a2a2a0"/><rect x="1502.4" y="259.2" width="17.6" height="11.4" fill="#fdfdfd"/><rect x="1505.7" y="259.5" width="10.8" height="10.8" fill="#4e4e4e"/><text x="1511" y="285" font-size="12" text-anchor="middle" textLength="22.8" lengthAdjust="spacingAndGlyphs" stroke="#fff" stroke-width="0.45">R32</text><path d="M1557 256.5 L1545.6 256.5 L1545.6 273.5 L1557 273.5" fill="none" stroke="#fff" stroke-width="2"/><path d="M1563 256.5 L1574.4 256.5 L1574.4 273.5 L1563 273.5" fill="none" stroke="#fff" stroke-width="2"/><rect x="1547.4" y="257.8" width="10" height="13.6" fill="#a2a2a0"/><rect x="1563" y="257.8" width="10" height="13.6" fill="#a2a2a0"/><rect x="1551.4" y="259.2" width="17.6" height="11.4" fill="#fdfdfd"/><rect x="1554.7" y="259.5" width="10.8" height="10.8" fill="#4e4e4e"/><text x="1560" y="285" font-size="12" text-anchor="middle" textLength="19.2" lengthAdjust="spacingAndGlyphs" stroke="#fff" stroke-width="0.45">R17</text><path d="M1607 256.5 L1595.6 256.5 L1595.6 273.5 L1607 273.5" fill="none" stroke="#fff" stroke-width="2"/><path d="M1613 256.5 L1624.4 256.5 L1624.4 273.5 L1613 273.5" fill="none" stroke="#fff" stroke-width="2"/><rect x="1597.4" y="257.8" width="10" height="13.6" fill="#a2a2a0"/><rect x="1613" y="257.8" width="10" height="13.6" fill="#a2a2a0"/><rect x="1601.4" y="259.2" width="17.6" height="11.4" fill="#fdfdfd"/><rect x="1604.7" y="259.5" width="10.8" height="10.8" fill="#4e4e4e"/><text x="1610" y="285" font-size="12" text-anchor="middle" textLength="19.2" lengthAdjust="spacingAndGlyphs" stroke="#fff" stroke-width="0.45">R19</text><circle cx="1302" cy="269" r="20.5" fill="#186a34" stroke="#fff" stroke-width="1.6"/><circle cx="1302" cy="269" r="9.3" fill="#a6a6a6" stroke="#a09060" stroke-width="0.8"/><circle cx="1671" cy="269" r="20.5" fill="#186a34" stroke="#fff" stroke-width="1.6"/><circle cx="1671" cy="269" r="9.3" fill="#a6a6a6" stroke="#a09060" stroke-width="0.8"/><circle cx="1302" cy="417" r="20.5" fill="#186a34" stroke="#fff" stroke-width="1.6"/><circle cx="1302" cy="417" r="9.3" fill="#a6a6a6" stroke="#a09060" stroke-width="0.8"/><circle cx="1671" cy="417" r="20.5" fill="#186a34" stroke="#fff" stroke-width="1.6"/><circle cx="1671" cy="417" r="9.3" fill="#a6a6a6" stroke="#a09060" stroke-width="0.8"/><circle cx="1302" cy="713" r="20.5" fill="#186a34" stroke="#fff" stroke-width="1.6"/><circle cx="1302" cy="713" r="9.3" fill="#a6a6a6" stroke="#a09060" stroke-width="0.8"/><circle cx="1671" cy="713" r="20.5" fill="#186a34" stroke="#fff" stroke-width="1.6"/><circle cx="1671" cy="713" r="9.3" fill="#a6a6a6" stroke="#a09060" stroke-width="0.8"/><circle cx="1302" cy="860" r="20.5" fill="#186a34" stroke="#fff" stroke-width="1.6"/><circle cx="1302" cy="860" r="9.3" fill="#a6a6a6" stroke="#a09060" stroke-width="0.8"/><circle cx="1671" cy="860" r="20.5" fill="#186a34" stroke="#fff" stroke-width="1.6"/><circle cx="1671" cy="860" r="9.3" fill="#a6a6a6" stroke="#a09060" stroke-width="0.8"/><circle cx="1486" cy="368" r="20.5" fill="#186a34" stroke="#fff" stroke-width="1.6"/><circle cx="1486" cy="368" r="9.3" fill="#a8a8c0" stroke="#a09060" stroke-width="0.8"/><circle cx="1589" cy="860" r="20.5" fill="#186a34" stroke="#fff" stroke-width="1.6"/><circle cx="1589" cy="860" r="9.3" fill="#6a6a8a" stroke="#a09060" stroke-width="0.8"/><path d="M1447 330.1 L1447 335.4 L1526.8 335.4 L1526.8 330.1" fill="none" stroke="#fff" stroke-width="1.5"/><rect x="1447" y="293.6" width="79.8" height="35.6" fill="#0b4ab4"/><rect x="1447" y="288.6" width="6" height="5.5" fill="#0b4ab4"/><rect x="1520.8" y="288.6" width="6" height="5.5" fill="#0b4ab4"/><rect x="1447" y="329.2" width="79.8" height="5.4" fill="#040d26"/><path d="M1478 333.6 L1486 333.6" stroke="#8a8a9a" stroke-width="1"/><circle cx="1517.1" cy="317.8" r="9.4" fill="#9a7c10"/><circle cx="1516.6" cy="317.1" r="9.2" fill="#fbdc1c"/><path d="M1510.6 311.1 L1524.6 320.6" stroke="#3a3208" stroke-width="1"/><text x="1459" y="346" font-size="12" text-anchor="middle" textLength="22.8" lengthAdjust="spacingAndGlyphs" stroke="#fff" stroke-width="0.45">R43</text><text x="1273" y="349" font-size="12" text-anchor="middle" textLength="22.8" lengthAdjust="spacingAndGlyphs" stroke="#fff" stroke-width="0.45">R26</text><text x="1273" y="402" font-size="12" text-anchor="middle" textLength="22.8" lengthAdjust="spacingAndGlyphs" stroke="#fff" stroke-width="0.45">R28</text><text x="1347" y="349" font-size="12" text-anchor="middle" textLength="15.2" lengthAdjust="spacingAndGlyphs" stroke="#fff" stroke-width="0.45">U6</text><path d="M1278 351.5 L1266.6 351.5 L1266.6 368.5 L1278 368.5" fill="none" stroke="#fff" stroke-width="2"/><path d="M1284 351.5 L1295.4 351.5 L1295.4 368.5 L1284 368.5" fill="none" stroke="#fff" stroke-width="2"/><rect x="1268.4" y="352.8" width="10" height="13.6" fill="#a2a2a0"/><rect x="1284" y="352.8" width="10" height="13.6" fill="#a2a2a0"/><rect x="1272.4" y="354.2" width="17.6" height="11.4" fill="#fdfdfd"/><rect x="1275.7" y="354.5" width="10.8" height="10.8" fill="#4e4e4e"/><path d="M1278 374 L1266.6 374 L1266.6 391 L1278 391" fill="none" stroke="#fff" stroke-width="2"/><path d="M1284 374 L1295.4 374 L1295.4 391 L1284 391" fill="none" stroke="#fff" stroke-width="2"/><rect x="1268.4" y="375.3" width="10" height="13.6" fill="#a2a2a0"/><rect x="1284" y="375.3" width="10" height="13.6" fill="#a2a2a0"/><rect x="1272.4" y="376.7" width="17.6" height="11.4" fill="#fdfdfd"/><rect x="1275.7" y="377" width="10.8" height="10.8" fill="#4e4e4e"/><rect x="1318" y="354.4" width="14" height="5.2" rx="2.4" fill="#b4b4a4"/><rect x="1362" y="354.4" width="14" height="5.2" rx="2.4" fill="#b4b4a4"/><rect x="1325" y="355.4" width="5" height="3.2" fill="#e8e8e0"/><rect x="1364" y="355.4" width="5" height="3.2" fill="#e8e8e0"/><rect x="1318" y="364.4" width="14" height="5.2" rx="2.4" fill="#b4b4a4"/><rect x="1362" y="364.4" width="14" height="5.2" rx="2.4" fill="#b4b4a4"/><rect x="1325" y="365.4" width="5" height="3.2" fill="#e8e8e0"/><rect x="1364" y="365.4" width="5" height="3.2" fill="#e8e8e0"/><rect x="1318" y="374.4" width="14" height="5.2" rx="2.4" fill="#b4b4a4"/><rect x="1362" y="374.4" width="14" height="5.2" rx="2.4" fill="#b4b4a4"/><rect x="1325" y="375.4" width="5" height="3.2" fill="#e8e8e0"/><rect x="1364" y="375.4" width="5" height="3.2" fill="#e8e8e0"/><rect x="1318" y="384.4" width="14" height="5.2" rx="2.4" fill="#b4b4a4"/><rect x="1362" y="384.4" width="14" height="5.2" rx="2.4" fill="#b4b4a4"/><rect x="1325" y="385.4" width="5" height="3.2" fill="#e8e8e0"/><rect x="1364" y="385.4" width="5" height="3.2" fill="#e8e8e0"/><rect x="1330.5" y="351.5" width="33" height="41" fill="none" stroke="#fff" stroke-width="1.3"/><rect x="1331.5" y="352.5" width="31" height="39" fill="#3c3c3c"/><rect x="1345" y="367" width="3.2" height="10" fill="#6a6a6a"/><circle cx="1320" cy="357" r="2.4" fill="#ff10e8"/><circle cx="1327" cy="351" r="1.6" fill="#fff"/><rect x="1406.5" y="320.5" width="13" height="13" fill="#a9a999"/><rect x="1410.4" y="324.4" width="5.2" height="5.2" fill="#f4e23a" stroke="#111" stroke-width="0.9"/><rect x="1406.5" y="410.5" width="13" height="13" fill="#a9a999"/><rect x="1410.4" y="414.4" width="5.2" height="5.2" fill="#f4e23a" stroke="#111" stroke-width="0.9"/><rect x="1401" y="353" width="22" height="38" fill="none" stroke="#fff" stroke-width="1.4"/><circle cx="1412" cy="353" r="5.6" fill="#a8a89a"/><circle cx="1412" cy="392" r="5.6" fill="#a8a89a"/><ellipse cx="1412" cy="372" rx="10.7" ry="22.6" fill="url(#gor)"/><path d="M1409 394 L1414 398" stroke="#b86e08" stroke-width="2.2"/><text x="1432" y="377" font-size="12" text-anchor="middle" textLength="15.2" lengthAdjust="spacingAndGlyphs" stroke="#fff" stroke-width="0.45">C5</text><rect x="1554.5" y="320.5" width="13" height="13" fill="#a9a999"/><rect x="1558.4" y="324.4" width="5.2" height="5.2" fill="#f4e23a" stroke="#111" stroke-width="0.9"/><rect x="1554.5" y="410.5" width="13" height="13" fill="#a9a999"/><rect x="1558.4" y="414.4" width="5.2" height="5.2" fill="#f4e23a" stroke="#111" stroke-width="0.9"/><rect x="1550" y="353" width="22" height="38" fill="none" stroke="#fff" stroke-width="1.4"/><circle cx="1561" cy="353" r="5.6" fill="#a8a89a"/><circle cx="1561" cy="392" r="5.6" fill="#a8a89a"/><ellipse cx="1561" cy="372" rx="10.7" ry="22.6" fill="url(#gor)"/><path d="M1558 394 L1563 398" stroke="#b86e08" stroke-width="2.2"/><text x="1539" y="377" font-size="12" text-anchor="middle" textLength="15.2" lengthAdjust="spacingAndGlyphs" stroke="#fff" stroke-width="0.45">C6</text><text x="1627" y="349" font-size="12" text-anchor="middle" textLength="15.2" lengthAdjust="spacingAndGlyphs" stroke="#fff" stroke-width="0.45">U7</text><rect x="1598" y="354.4" width="14" height="5.2" rx="2.4" fill="#b4b4a4"/><rect x="1642" y="354.4" width="14" height="5.2" rx="2.4" fill="#b4b4a4"/><rect x="1605" y="355.4" width="5" height="3.2" fill="#e8e8e0"/><rect x="1644" y="355.4" width="5" height="3.2" fill="#e8e8e0"/><rect x="1598" y="364.4" width="14" height="5.2" rx="2.4" fill="#b4b4a4"/><rect x="1642" y="364.4" width="14" height="5.2" rx="2.4" fill="#b4b4a4"/><rect x="1605" y="365.4" width="5" height="3.2" fill="#e8e8e0"/><rect x="1644" y="365.4" width="5" height="3.2" fill="#e8e8e0"/><rect x="1598" y="374.4" width="14" height="5.2" rx="2.4" fill="#b4b4a4"/><rect x="1642" y="374.4" width="14" height="5.2" rx="2.4" fill="#b4b4a4"/><rect x="1605" y="375.4" width="5" height="3.2" fill="#e8e8e0"/><rect x="1644" y="375.4" width="5" height="3.2" fill="#e8e8e0"/><rect x="1598" y="384.4" width="14" height="5.2" rx="2.4" fill="#b4b4a4"/><rect x="1642" y="384.4" width="14" height="5.2" rx="2.4" fill="#b4b4a4"/><rect x="1605" y="385.4" width="5" height="3.2" fill="#e8e8e0"/><rect x="1644" y="385.4" width="5" height="3.2" fill="#e8e8e0"/><rect x="1610.5" y="351.5" width="33" height="41" fill="none" stroke="#fff" stroke-width="1.3"/><rect x="1611.5" y="352.5" width="31" height="39" fill="#3c3c3c"/><rect x="1625" y="367" width="3.2" height="10" fill="#6a6a6a"/><circle cx="1654" cy="388" r="2.4" fill="#ff10e8"/><circle cx="1648" cy="397" r="1.8" fill="#fff"/><text x="1701" y="348" font-size="12" text-anchor="middle" textLength="22.8" lengthAdjust="spacingAndGlyphs" stroke="#fff" stroke-width="0.45">R29</text><text x="1701" y="402" font-size="12" text-anchor="middle" textLength="22.8" lengthAdjust="spacingAndGlyphs" stroke="#fff" stroke-width="0.45">R27</text><path d="M1689 351.5 L1677.6 351.5 L1677.6 368.5 L1689 368.5" fill="none" stroke="#fff" stroke-width="2"/><path d="M1695 351.5 L1706.4 351.5 L1706.4 368.5 L1695 368.5" fill="none" stroke="#fff" stroke-width="2"/><rect x="1679.4" y="352.8" width="10" height="13.6" fill="#a2a2a0"/><rect x="1695" y="352.8" width="10" height="13.6" fill="#a2a2a0"/><rect x="1683.4" y="354.2" width="17.6" height="11.4" fill="#fdfdfd"/><rect x="1686.7" y="354.5" width="10.8" height="10.8" fill="#4e4e4e"/><path d="M1689 374 L1677.6 374 L1677.6 391 L1689 391" fill="none" stroke="#fff" stroke-width="2"/><path d="M1695 374 L1706.4 374 L1706.4 391 L1695 391" fill="none" stroke="#fff" stroke-width="2"/><rect x="1679.4" y="375.3" width="10" height="13.6" fill="#a2a2a0"/><rect x="1695" y="375.3" width="10" height="13.6" fill="#a2a2a0"/><rect x="1683.4" y="376.7" width="17.6" height="11.4" fill="#fdfdfd"/><rect x="1686.7" y="377" width="10.8" height="10.8" fill="#4e4e4e"/><path d="M1360 400 L1351.1 400 Q1348.6 400 1348.6 402.5 L1348.6 414.5 Q1348.6 417 1351.1 417 L1360 417" fill="none" stroke="#fff" stroke-width="2"/><path d="M1366 400 L1374.9 400 Q1377.4 400 1377.4 402.5 L1377.4 414.5 Q1377.4 417 1374.9 417 L1366 417" fill="none" stroke="#fff" stroke-width="2"/><rect x="1350.4" y="401.3" width="10" height="13.6" fill="#a2a2a0"/><rect x="1366" y="401.3" width="10" height="13.6" fill="#a2a2a0"/><rect x="1354.8" y="403.5" width="17" height="10.6" fill="#fdfdfd"/><rect x="1358.4" y="403.7" width="9.2" height="10.4" fill="#c4960c"/><text x="1363" y="430" font-size="12" text-anchor="middle" textLength="15.2" lengthAdjust="spacingAndGlyphs" stroke="#fff" stroke-width="0.45">C7</text><path d="M1607 400 L1598.1 400 Q1595.6 400 1595.6 402.5 L1595.6 414.5 Q1595.6 417 1598.1 417 L1607 417" fill="none" stroke="#fff" stroke-width="2"/><path d="M1613 400 L1621.9 400 Q1624.4 400 1624.4 402.5 L1624.4 414.5 Q1624.4 417 1621.9 417 L1613 417" fill="none" stroke="#fff" stroke-width="2"/><rect x="1597.4" y="401.3" width="10" height="13.6" fill="#a2a2a0"/><rect x="1613" y="401.3" width="10" height="13.6" fill="#a2a2a0"/><rect x="1601.8" y="403.5" width="17" height="10.6" fill="#fdfdfd"/><rect x="1605.4" y="403.7" width="9.2" height="10.4" fill="#c4960c"/><text x="1610" y="430" font-size="12" text-anchor="middle" textLength="15.2" lengthAdjust="spacingAndGlyphs" stroke="#fff" stroke-width="0.45">C8</text><rect x="1245" y="463" width="64.500" height="205" fill="#186a34"/><rect x="1723" y="463" width="9" height="205" fill="#186a34"/><path d="M1465.2 543 L1465.2 627" stroke="#1c6a34" stroke-width="11.500" stroke-linecap="round" fill="none"/><path d="M1465.2 543 L1465.2 627" stroke="#2b7b3b" stroke-width="6.500" stroke-linecap="round" fill="none"/><circle cx="1465.2" cy="544" r="1.1" fill="#9090a8"/><path d="M1486.8 560 L1486.8 627" stroke="#1c6a34" stroke-width="11.500" stroke-linecap="round" fill="none"/><path d="M1486.8 560 L1486.8 627" stroke="#2b7b3b" stroke-width="6.500" stroke-linecap="round" fill="none"/><circle cx="1486.8" cy="561" r="1.1" fill="#9090a8"/><path d="M1508 577 L1508 627" stroke="#1c6a34" stroke-width="11.500" stroke-linecap="round" fill="none"/><path d="M1508 577 L1508 627" stroke="#2b7b3b" stroke-width="6.500" stroke-linecap="round" fill="none"/><circle cx="1508" cy="578" r="1.1" fill="#9090a8"/><path d="M1528 593.5 L1528 627" stroke="#1c6a34" stroke-width="11.500" stroke-linecap="round" fill="none"/><path d="M1528 593.5 L1528 627" stroke="#2b7b3b" stroke-width="6.500" stroke-linecap="round" fill="none"/><circle cx="1528" cy="594.5" r="1.1" fill="#9090a8"/><circle cx="1495.3" cy="512.9" r="1.1" fill="#8a8aa0"/><circle cx="1526.8" cy="512.9" r="1.1" fill="#8a8aa0"/><circle cx="1495.3" cy="540.3" r="1.1" fill="#8a8aa0"/><circle cx="1526.8" cy="540.3" r="1.1" fill="#8a8aa0"/><circle cx="1453.5" cy="622.5" r="1.1" fill="#8a8aa0"/><circle cx="1453.5" cy="458.5" r="1.1" fill="#8a8aa0"/><circle cx="1412.400" cy="606" r="1.100" fill="#d01010"/><text x="1252" y="461" font-size="12" text-anchor="start" textLength="19.2" lengthAdjust="spacingAndGlyphs" stroke="#fff" stroke-width="0.45">U12</text><path d="M1251.400 465.400 L1722.400 465.400 L1722.400 664.300 L1251.400 664.300 L1251.400 608 Q1252 598.600 1260 597.600 L1264.200 597.600 L1264.200 532.100 L1260 532.100 Q1252 531 1251.400 521.500 Z" fill="none" stroke="#fff" stroke-width="1.7"/><circle cx="1273.2" cy="488" r="12.600" fill="none" stroke="#fff" stroke-width="1.6"/><circle cx="1700.6" cy="488" r="12.600" fill="none" stroke="#fff" stroke-width="1.6"/><circle cx="1273.2" cy="642.5" r="12.600" fill="none" stroke="#fff" stroke-width="1.6"/><circle cx="1700.6" cy="642.5" r="12.600" fill="none" stroke="#fff" stroke-width="1.6"/><rect x="1309.600" y="481.7" width="354.700" height="21" fill="#186a34" stroke="#fff" stroke-width="1.8"/><circle cx="1320.2" cy="491.8" r="7.100" fill="#a89c78"/><circle cx="1320.2" cy="491.8" r="6.200" fill="#9c9cb4"/><path d="M1317.6 491.3 Q1317.8 494.4 1321 494.6" fill="none" stroke="#2a2a3a" stroke-width="0.7"/><circle cx="1341.06" cy="491.8" r="7.100" fill="#a89c78"/><circle cx="1341.06" cy="491.8" r="6.200" fill="#9c9cb4"/><path d="M1338.46 491.3 Q1338.66 494.4 1341.86 494.6" fill="none" stroke="#2a2a3a" stroke-width="0.7"/><circle cx="1361.91" cy="491.8" r="7.100" fill="#a89c78"/><circle cx="1361.91" cy="491.8" r="6.200" fill="#9c9cb4"/><path d="M1359.31 491.3 Q1359.51 494.4 1362.71 494.6" fill="none" stroke="#2a2a3a" stroke-width="0.7"/><circle cx="1382.77" cy="491.8" r="7.100" fill="#a89c78"/><circle cx="1382.77" cy="491.8" r="6.200" fill="#9c9cb4"/><path d="M1380.17 491.3 Q1380.37 494.4 1383.57 494.6" fill="none" stroke="#2a2a3a" stroke-width="0.7"/><circle cx="1403.63" cy="491.8" r="7.100" fill="#a89c78"/><circle cx="1403.63" cy="491.8" r="6.200" fill="#9c9cb4"/><path d="M1401.03 491.3 Q1401.23 494.4 1404.43 494.6" fill="none" stroke="#2a2a3a" stroke-width="0.7"/><circle cx="1424.49" cy="491.8" r="7.100" fill="#a89c78"/><circle cx="1424.49" cy="491.8" r="6.200" fill="#9c9cb4"/><path d="M1421.89 491.3 Q1422.09 494.4 1425.29 494.6" fill="none" stroke="#2a2a3a" stroke-width="0.7"/><circle cx="1445.34" cy="491.8" r="7.100" fill="#a89c78"/><circle cx="1445.34" cy="491.8" r="6.200" fill="#9c9cb4"/><path d="M1442.74 491.3 Q1442.94 494.4 1446.14 494.6" fill="none" stroke="#2a2a3a" stroke-width="0.7"/><circle cx="1466.2" cy="491.8" r="7.100" fill="#a89c78"/><circle cx="1466.2" cy="491.8" r="6.200" fill="#9c9cb4"/><path d="M1463.6 491.3 Q1463.8 494.4 1467 494.6" fill="none" stroke="#2a2a3a" stroke-width="0.7"/><circle cx="1487.06" cy="491.8" r="7.100" fill="#a89c78"/><circle cx="1487.06" cy="491.8" r="6.200" fill="#9c9cb4"/><path d="M1484.46 491.3 Q1484.66 494.4 1487.86 494.6" fill="none" stroke="#2a2a3a" stroke-width="0.7"/><circle cx="1507.91" cy="491.8" r="7.100" fill="#a89c78"/><circle cx="1507.91" cy="491.8" r="6.200" fill="#9c9cb4"/><path d="M1505.31 491.3 Q1505.51 494.4 1508.71 494.6" fill="none" stroke="#2a2a3a" stroke-width="0.7"/><circle cx="1528.77" cy="491.8" r="7.100" fill="#a89c78"/><circle cx="1528.77" cy="491.8" r="6.200" fill="#9c9cb4"/><path d="M1526.17 491.3 Q1526.37 494.4 1529.57 494.6" fill="none" stroke="#2a2a3a" stroke-width="0.7"/><circle cx="1549.63" cy="491.8" r="7.100" fill="#a89c78"/><circle cx="1549.63" cy="491.8" r="6.200" fill="#9c9cb4"/><path d="M1547.03 491.3 Q1547.23 494.4 1550.43 494.6" fill="none" stroke="#2a2a3a" stroke-width="0.7"/><circle cx="1570.48" cy="491.8" r="7.100" fill="#a89c78"/><circle cx="1570.48" cy="491.8" r="6.200" fill="#9c9cb4"/><path d="M1567.88 491.3 Q1568.08 494.4 1571.28 494.6" fill="none" stroke="#2a2a3a" stroke-width="0.7"/><circle cx="1591.34" cy="491.8" r="7.100" fill="#a89c78"/><circle cx="1591.34" cy="491.8" r="6.200" fill="#9c9cb4"/><path d="M1588.74 491.3 Q1588.94 494.4 1592.14 494.6" fill="none" stroke="#2a2a3a" stroke-width="0.7"/><circle cx="1612.2" cy="491.8" r="7.100" fill="#a89c78"/><circle cx="1612.2" cy="491.8" r="6.200" fill="#9c9cb4"/><path d="M1609.6 491.3 Q1609.8 494.4 1613 494.6" fill="none" stroke="#2a2a3a" stroke-width="0.7"/><circle cx="1633.06" cy="491.8" r="7.100" fill="#a89c78"/><circle cx="1633.06" cy="491.8" r="6.200" fill="#9c9cb4"/><path d="M1630.46 491.3 Q1630.65 494.4 1633.86 494.6" fill="none" stroke="#2a2a3a" stroke-width="0.7"/><circle cx="1653.91" cy="491.8" r="7.100" fill="#a89c78"/><circle cx="1653.91" cy="491.8" r="6.200" fill="#9c9cb4"/><path d="M1651.31 491.3 Q1651.51 494.4 1654.71 494.6" fill="none" stroke="#2a2a3a" stroke-width="0.7"/><rect x="1309.600" y="627.5" width="354.700" height="21" fill="#186a34" stroke="#fff" stroke-width="1.8"/><rect x="1313.2" y="631.1" width="14" height="14" fill="#a8a090"/><circle cx="1320.2" cy="638.1" r="5.600" fill="#9a9ab2"/><path d="M1317.6 637.6 Q1317.8 640.7 1321 640.9" fill="none" stroke="#2a2a3a" stroke-width="0.7"/><circle cx="1341.06" cy="638.1" r="7.100" fill="#a89c78"/><circle cx="1341.06" cy="638.1" r="6.200" fill="#9c9cb4"/><path d="M1338.46 637.6 Q1338.66 640.7 1341.86 640.9" fill="none" stroke="#2a2a3a" stroke-width="0.7"/><circle cx="1361.91" cy="638.1" r="7.100" fill="#a89c78"/><circle cx="1361.91" cy="638.1" r="6.200" fill="#9c9cb4"/><path d="M1359.31 637.6 Q1359.51 640.7 1362.71 640.9" fill="none" stroke="#2a2a3a" stroke-width="0.7"/><circle cx="1382.77" cy="638.1" r="7.100" fill="#a89c78"/><circle cx="1382.77" cy="638.1" r="6.200" fill="#9c9cb4"/><path d="M1380.17 637.6 Q1380.37 640.7 1383.57 640.9" fill="none" stroke="#2a2a3a" stroke-width="0.7"/><circle cx="1403.63" cy="638.1" r="7.100" fill="#a89c78"/><circle cx="1403.63" cy="638.1" r="6.200" fill="#9c9cb4"/><path d="M1401.03 637.6 Q1401.23 640.7 1404.43 640.9" fill="none" stroke="#2a2a3a" stroke-width="0.7"/><circle cx="1424.49" cy="638.1" r="7.100" fill="#a89c78"/><circle cx="1424.49" cy="638.1" r="6.200" fill="#9c9cb4"/><path d="M1421.89 637.6 Q1422.09 640.7 1425.29 640.9" fill="none" stroke="#2a2a3a" stroke-width="0.7"/><circle cx="1445.34" cy="638.1" r="7.100" fill="#a89c78"/><circle cx="1445.34" cy="638.1" r="6.200" fill="#9c9cb4"/><path d="M1442.74 637.6 Q1442.94 640.7 1446.14 640.9" fill="none" stroke="#2a2a3a" stroke-width="0.7"/><circle cx="1466.2" cy="638.1" r="7.100" fill="#a89c78"/><circle cx="1466.2" cy="638.1" r="6.200" fill="#9c9cb4"/><path d="M1463.6 637.6 Q1463.8 640.7 1467 640.9" fill="none" stroke="#2a2a3a" stroke-width="0.7"/><circle cx="1487.06" cy="638.1" r="7.100" fill="#a89c78"/><circle cx="1487.06" cy="638.1" r="6.200" fill="#9c9cb4"/><path d="M1484.46 637.6 Q1484.66 640.7 1487.86 640.9" fill="none" stroke="#2a2a3a" stroke-width="0.7"/><circle cx="1507.91" cy="638.1" r="7.100" fill="#a89c78"/><circle cx="1507.91" cy="638.1" r="6.200" fill="#9c9cb4"/><path d="M1505.31 637.6 Q1505.51 640.7 1508.71 640.9" fill="none" stroke="#2a2a3a" stroke-width="0.7"/><circle cx="1528.77" cy="638.1" r="7.100" fill="#a89c78"/><circle cx="1528.77" cy="638.1" r="6.200" fill="#9c9cb4"/><path d="M1526.17 637.6 Q1526.37 640.7 1529.57 640.9" fill="none" stroke="#2a2a3a" stroke-width="0.7"/><circle cx="1549.63" cy="638.1" r="7.100" fill="#a89c78"/><circle cx="1549.63" cy="638.1" r="6.200" fill="#9c9cb4"/><path d="M1547.03 637.6 Q1547.23 640.7 1550.43 640.9" fill="none" stroke="#2a2a3a" stroke-width="0.7"/><circle cx="1570.48" cy="638.1" r="7.100" fill="#a89c78"/><circle cx="1570.48" cy="638.1" r="6.200" fill="#9c9cb4"/><path d="M1567.88 637.6 Q1568.08 640.7 1571.28 640.9" fill="none" stroke="#2a2a3a" stroke-width="0.7"/><circle cx="1591.34" cy="638.1" r="7.100" fill="#a89c78"/><circle cx="1591.34" cy="638.1" r="6.200" fill="#9c9cb4"/><path d="M1588.74 637.6 Q1588.94 640.7 1592.14 640.9" fill="none" stroke="#2a2a3a" stroke-width="0.7"/><circle cx="1612.2" cy="638.1" r="7.100" fill="#a89c78"/><circle cx="1612.2" cy="638.1" r="6.200" fill="#9c9cb4"/><path d="M1609.6 637.6 Q1609.8 640.7 1613 640.9" fill="none" stroke="#2a2a3a" stroke-width="0.7"/><circle cx="1633.06" cy="638.1" r="7.100" fill="#a89c78"/><circle cx="1633.06" cy="638.1" r="6.200" fill="#9c9cb4"/><path d="M1630.46 637.6 Q1630.65 640.7 1633.86 640.9" fill="none" stroke="#2a2a3a" stroke-width="0.7"/><circle cx="1653.91" cy="638.1" r="7.100" fill="#a89c78"/><circle cx="1653.91" cy="638.1" r="6.200" fill="#9c9cb4"/><path d="M1651.31 637.6 Q1651.51 640.7 1654.71 640.9" fill="none" stroke="#2a2a3a" stroke-width="0.7"/><path d="M1304.500 652.200 L1307 654.800 L1304.500 657.400 L1302 654.800 Z" fill="none" stroke="#fff" stroke-width="1.1"/><rect x="1574.300" y="534.200" width="40.300" height="61.300" fill="none" stroke="#fff" stroke-width="1.6"/><circle cx="1583.8" cy="544.2" r="5.100" fill="none" stroke="#fff" stroke-width="1.4"/><circle cx="1583.8" cy="565" r="5.100" fill="none" stroke="#fff" stroke-width="1.4"/><circle cx="1583.8" cy="586" r="5.100" fill="none" stroke="#fff" stroke-width="1.4"/><circle cx="1604.9" cy="544.2" r="5.100" fill="none" stroke="#fff" stroke-width="1.4"/><circle cx="1604.9" cy="565" r="5.100" fill="none" stroke="#fff" stroke-width="1.4"/><circle cx="1604.9" cy="586" r="5.100" fill="none" stroke="#fff" stroke-width="1.4"/><rect x="1627.500" y="539.400" width="29.900" height="51" fill="none" stroke="#fff" stroke-width="1.6"/><rect x="1637" y="554.700" width="11" height="20.300" fill="#fff"/><rect x="1697.500" y="523.400" width="19.700" height="82.900" fill="none" stroke="#fff" stroke-width="1.6"/><circle cx="1707" cy="533.9" r="5.100" fill="none" stroke="#fff" stroke-width="1.4"/><circle cx="1707" cy="554.7" r="5.100" fill="none" stroke="#fff" stroke-width="1.4"/><circle cx="1707" cy="575.5" r="5.100" fill="none" stroke="#fff" stroke-width="1.4"/><circle cx="1707" cy="596.3" r="5.100" fill="none" stroke="#fff" stroke-width="1.4"/><text x="1363" y="674" font-size="12" text-anchor="middle" textLength="22.8" lengthAdjust="spacingAndGlyphs" stroke="#fff" stroke-width="0.45">R45</text><text x="1412" y="674" font-size="12" text-anchor="middle" textLength="22.8" lengthAdjust="spacingAndGlyphs" stroke="#fff" stroke-width="0.45">R44</text><text x="1363" y="728" font-size="12" text-anchor="middle" textLength="22.8" lengthAdjust="spacingAndGlyphs" stroke="#fff" stroke-width="0.45">R46</text><text x="1412" y="728" font-size="12" text-anchor="middle" textLength="11.6" lengthAdjust="spacingAndGlyphs" stroke="#fff" stroke-width="0.45">C1</text><path d="M1360 676.5 L1348.6 676.5 L1348.6 693.5 L1360 693.5" fill="none" stroke="#fff" stroke-width="2"/><path d="M1366 676.5 L1377.4 676.5 L1377.4 693.5 L1366 693.5" fill="none" stroke="#fff" stroke-width="2"/><rect x="1350.4" y="677.8" width="10" height="13.6" fill="#a2a2a0"/><rect x="1366" y="677.8" width="10" height="13.6" fill="#a2a2a0"/><rect x="1354.4" y="679.2" width="17.6" height="11.4" fill="#fdfdfd"/><rect x="1357.7" y="679.5" width="10.8" height="10.8" fill="#4e4e4e"/><path d="M1409 676.5 L1397.6 676.5 L1397.6 693.5 L1409 693.5" fill="none" stroke="#fff" stroke-width="2"/><path d="M1415 676.5 L1426.4 676.5 L1426.4 693.5 L1415 693.5" fill="none" stroke="#fff" stroke-width="2"/><rect x="1399.4" y="677.8" width="10" height="13.6" fill="#a2a2a0"/><rect x="1415" y="677.8" width="10" height="13.6" fill="#a2a2a0"/><rect x="1403.4" y="679.2" width="17.6" height="11.4" fill="#fdfdfd"/><rect x="1406.7" y="679.5" width="10.8" height="10.8" fill="#4e4e4e"/><path d="M1360 699.5 L1348.6 699.5 L1348.6 716.5 L1360 716.5" fill="none" stroke="#fff" stroke-width="2"/><path d="M1366 699.5 L1377.4 699.5 L1377.4 716.5 L1366 716.5" fill="none" stroke="#fff" stroke-width="2"/><rect x="1350.4" y="700.8" width="10" height="13.6" fill="#a2a2a0"/><rect x="1366" y="700.8" width="10" height="13.6" fill="#a2a2a0"/><rect x="1354.4" y="702.2" width="17.6" height="11.4" fill="#fdfdfd"/><rect x="1357.7" y="702.5" width="10.8" height="10.8" fill="#4e4e4e"/><path d="M1409 699.5 L1400.1 699.5 Q1397.6 699.5 1397.6 702 L1397.6 714 Q1397.6 716.5 1400.1 716.5 L1409 716.5" fill="none" stroke="#fff" stroke-width="2"/><path d="M1415 699.5 L1423.9 699.5 Q1426.4 699.5 1426.4 702 L1426.4 714 Q1426.4 716.5 1423.9 716.5 L1415 716.5" fill="none" stroke="#fff" stroke-width="2"/><rect x="1399.4" y="700.8" width="10" height="13.6" fill="#a2a2a0"/><rect x="1415" y="700.8" width="10" height="13.6" fill="#a2a2a0"/><rect x="1403.8" y="703" width="17" height="10.6" fill="#fdfdfd"/><rect x="1407.4" y="703.2" width="9.2" height="10.4" fill="#c4960c"/><text x="1487" y="664" font-size="12" text-anchor="middle" textLength="11.6" lengthAdjust="spacingAndGlyphs" stroke="#fff" stroke-width="0.45">U1</text><rect x="1452" y="674" width="22" height="8.500" fill="#b8b8b0"/><rect x="1452" y="692.5" width="22" height="8.500" fill="#b8b8b0"/><rect x="1452" y="711" width="22" height="8.500" fill="#b8b8b0"/><rect x="1500" y="681" width="20" height="30" fill="#c4c4c0" stroke="#e8e8e8" stroke-width="1"/><rect x="1471" y="667" width="32" height="59" fill="#3a3a3a" stroke="#fff" stroke-width="1.2"/><rect x="1486" y="691" width="2.600" height="12" fill="#666"/><circle cx="1450" cy="679" r="3.200" fill="#ff10e8"/><text x="1539" y="680" font-size="12" text-anchor="middle" textLength="15.2" lengthAdjust="spacingAndGlyphs" stroke="#fff" stroke-width="0.45">C2</text><rect x="1530.5" y="684" width="17" height="28" rx="2" fill="none" stroke="#fff" stroke-width="1.3"/><rect x="1532.5" y="686" width="13" height="24" fill="#b4b4a4"/><rect x="1534" y="690" width="10" height="16" fill="#f0f0ea"/><rect x="1534" y="693.5" width="10" height="9" fill="#c2921c"/><text x="1567.5" y="690.5" font-size="12" text-anchor="middle" textLength="11.6" lengthAdjust="spacingAndGlyphs" stroke="#fff" stroke-width="0.45">Q1</text><rect x="1558" y="693" width="6.700" height="12" fill="#a4a496"/><rect x="1574" y="693" width="7" height="12" fill="#a4a496"/><rect x="1565" y="713.500" width="7.600" height="11.200" fill="#a4a496"/><rect x="1559.800" y="696" width="3" height="5" fill="#e8e8e8"/><rect x="1567.300" y="716" width="3" height="5" fill="#e8e8e8"/><rect x="1576.500" y="695.500" width="3.200" height="3.200" fill="#ff30e0"/><path d="M1566 701.500 L1573 701.500" stroke="#fff" stroke-width="1"/><rect x="1556.800" y="704.500" width="24.900" height="9.700" fill="#343434" stroke="#cfcfcf" stroke-width="0.7"/><text x="1609" y="673" font-size="12" text-anchor="middle" textLength="19.2" lengthAdjust="spacingAndGlyphs" stroke="#fff" stroke-width="0.45">R13</text><text x="1610" y="728" font-size="12" text-anchor="middle" textLength="19.2" lengthAdjust="spacingAndGlyphs" stroke="#fff" stroke-width="0.45">R15</text><path d="M1607 676.5 L1595.6 676.5 L1595.6 693.5 L1607 693.5" fill="none" stroke="#fff" stroke-width="2"/><path d="M1613 676.5 L1624.4 676.5 L1624.4 693.5 L1613 693.5" fill="none" stroke="#fff" stroke-width="2"/><rect x="1597.4" y="677.8" width="10" height="13.6" fill="#a2a2a0"/><rect x="1613" y="677.8" width="10" height="13.6" fill="#a2a2a0"/><rect x="1601.4" y="679.2" width="17.6" height="11.4" fill="#fdfdfd"/><rect x="1604.7" y="679.5" width="10.8" height="10.8" fill="#4e4e4e"/><path d="M1607 699.5 L1595.6 699.5 L1595.6 716.5 L1607 716.5" fill="none" stroke="#fff" stroke-width="2"/><path d="M1613 699.5 L1624.4 699.5 L1624.4 716.5 L1613 716.5" fill="none" stroke="#fff" stroke-width="2"/><rect x="1597.4" y="700.8" width="10" height="13.6" fill="#a2a2a0"/><rect x="1613" y="700.8" width="10" height="13.6" fill="#a2a2a0"/><rect x="1601.4" y="702.2" width="17.6" height="11.4" fill="#fdfdfd"/><rect x="1604.7" y="702.5" width="10.8" height="10.8" fill="#4e4e4e"/><rect x="1406.5" y="736.5" width="13" height="13" fill="#a9a999"/><rect x="1410.4" y="740.4" width="5.2" height="5.2" fill="#f4e23a" stroke="#111" stroke-width="0.9"/><rect x="1554.5" y="736.5" width="13" height="13" fill="#a9a999"/><rect x="1558.4" y="740.4" width="5.2" height="5.2" fill="#f4e23a" stroke="#111" stroke-width="0.9"/><rect x="1406.5" y="825.5" width="13" height="13" fill="#a9a999"/><rect x="1410.4" y="829.4" width="5.2" height="5.2" fill="#f4e23a" stroke="#111" stroke-width="0.9"/><rect x="1554.5" y="825.5" width="13" height="13" fill="#a9a999"/><rect x="1558.4" y="829.4" width="5.2" height="5.2" fill="#f4e23a" stroke="#111" stroke-width="0.9"/><text x="1283" y="764" font-size="12" text-anchor="middle" textLength="22.8" lengthAdjust="spacingAndGlyphs" stroke="#fff" stroke-width="0.45">R34</text><text x="1282" y="821.6" font-size="12" text-anchor="middle" textLength="22.8" lengthAdjust="spacingAndGlyphs" stroke="#fff" stroke-width="0.45">R38</text><path d="M1278 767 L1266.6 767 L1266.6 784 L1278 784" fill="none" stroke="#fff" stroke-width="2"/><path d="M1284 767 L1295.4 767 L1295.4 784 L1284 784" fill="none" stroke="#fff" stroke-width="2"/><rect x="1268.4" y="768.3" width="10" height="13.6" fill="#a2a2a0"/><rect x="1284" y="768.3" width="10" height="13.6" fill="#a2a2a0"/><rect x="1272.4" y="769.7" width="17.6" height="11.4" fill="#fdfdfd"/><rect x="1275.7" y="770" width="10.8" height="10.8" fill="#4e4e4e"/><path d="M1278 793.5 L1266.6 793.5 L1266.6 810.5 L1278 810.5" fill="none" stroke="#fff" stroke-width="2"/><path d="M1284 793.5 L1295.4 793.5 L1295.4 810.5 L1284 810.5" fill="none" stroke="#fff" stroke-width="2"/><rect x="1268.4" y="794.8" width="10" height="13.6" fill="#a2a2a0"/><rect x="1284" y="794.8" width="10" height="13.6" fill="#a2a2a0"/><rect x="1272.4" y="796.2" width="17.6" height="11.4" fill="#fdfdfd"/><rect x="1275.7" y="796.5" width="10.8" height="10.8" fill="#4e4e4e"/><text x="1346.7" y="764" font-size="12" text-anchor="middle" textLength="15.2" lengthAdjust="spacingAndGlyphs" stroke="#fff" stroke-width="0.45">U8</text><rect x="1318" y="770.2" width="14" height="5.2" rx="2.4" fill="#b4b4a4"/><rect x="1362" y="770.2" width="14" height="5.2" rx="2.4" fill="#b4b4a4"/><rect x="1325" y="771.2" width="5" height="3.2" fill="#e8e8e0"/><rect x="1364" y="771.2" width="5" height="3.2" fill="#e8e8e0"/><rect x="1318" y="780.2" width="14" height="5.2" rx="2.4" fill="#b4b4a4"/><rect x="1362" y="780.2" width="14" height="5.2" rx="2.4" fill="#b4b4a4"/><rect x="1325" y="781.2" width="5" height="3.2" fill="#e8e8e0"/><rect x="1364" y="781.2" width="5" height="3.2" fill="#e8e8e0"/><rect x="1318" y="790.2" width="14" height="5.2" rx="2.4" fill="#b4b4a4"/><rect x="1362" y="790.2" width="14" height="5.2" rx="2.4" fill="#b4b4a4"/><rect x="1325" y="791.2" width="5" height="3.2" fill="#e8e8e0"/><rect x="1364" y="791.2" width="5" height="3.2" fill="#e8e8e0"/><rect x="1318" y="800.2" width="14" height="5.2" rx="2.4" fill="#b4b4a4"/><rect x="1362" y="800.2" width="14" height="5.2" rx="2.4" fill="#b4b4a4"/><rect x="1325" y="801.2" width="5" height="3.2" fill="#e8e8e0"/><rect x="1364" y="801.2" width="5" height="3.2" fill="#e8e8e0"/><rect x="1330.5" y="767.3" width="33" height="41" fill="none" stroke="#fff" stroke-width="1.3"/><rect x="1331.5" y="768.3" width="31" height="39" fill="#3c3c3c"/><rect x="1345" y="782.8" width="3.2" height="10" fill="#6a6a6a"/><circle cx="1320" cy="772.8" r="2.4" fill="#ff10e8"/><circle cx="1327" cy="766.8" r="1.6" fill="#fff"/><rect x="1401" y="770" width="22" height="38" fill="none" stroke="#fff" stroke-width="1.4"/><circle cx="1412" cy="770" r="5.6" fill="#a8a89a"/><circle cx="1412" cy="809" r="5.6" fill="#a8a89a"/><ellipse cx="1412" cy="789" rx="10.7" ry="22.6" fill="url(#gor)"/><path d="M1409 811 L1414 815" stroke="#b86e08" stroke-width="2.2"/><text x="1398.5" y="786.3" font-size="12" text-anchor="middle" textLength="19.2" lengthAdjust="spacingAndGlyphs" transform="rotate(-90 1398.5 786.3)" stroke="#fff" stroke-width="0.45">C10</text><rect x="1550" y="770" width="22" height="38" fill="none" stroke="#fff" stroke-width="1.4"/><circle cx="1561" cy="770" r="5.6" fill="#a8a89a"/><circle cx="1561" cy="809" r="5.6" fill="#a8a89a"/><ellipse cx="1561" cy="789" rx="10.7" ry="22.6" fill="url(#gor)"/><path d="M1558 811 L1563 815" stroke="#b86e08" stroke-width="2.2"/><text x="1547" y="787.6" font-size="12" text-anchor="middle" textLength="15.6" lengthAdjust="spacingAndGlyphs" transform="rotate(-90 1547 787.6)" stroke="#fff" stroke-width="0.45">C11</text><text x="1626.5" y="763" font-size="12" text-anchor="middle" textLength="15.2" lengthAdjust="spacingAndGlyphs" stroke="#fff" stroke-width="0.45">U9</text><rect x="1597.7" y="770.2" width="14" height="5.2" rx="2.4" fill="#b4b4a4"/><rect x="1641.7" y="770.2" width="14" height="5.2" rx="2.4" fill="#b4b4a4"/><rect x="1604.7" y="771.2" width="5" height="3.2" fill="#e8e8e0"/><rect x="1643.7" y="771.2" width="5" height="3.2" fill="#e8e8e0"/><rect x="1597.7" y="780.2" width="14" height="5.2" rx="2.4" fill="#b4b4a4"/><rect x="1641.7" y="780.2" width="14" height="5.2" rx="2.4" fill="#b4b4a4"/><rect x="1604.7" y="781.2" width="5" height="3.2" fill="#e8e8e0"/><rect x="1643.7" y="781.2" width="5" height="3.2" fill="#e8e8e0"/><rect x="1597.7" y="790.2" width="14" height="5.2" rx="2.4" fill="#b4b4a4"/><rect x="1641.7" y="790.2" width="14" height="5.2" rx="2.4" fill="#b4b4a4"/><rect x="1604.7" y="791.2" width="5" height="3.2" fill="#e8e8e0"/><rect x="1643.7" y="791.2" width="5" height="3.2" fill="#e8e8e0"/><rect x="1597.7" y="800.2" width="14" height="5.2" rx="2.4" fill="#b4b4a4"/><rect x="1641.7" y="800.2" width="14" height="5.2" rx="2.4" fill="#b4b4a4"/><rect x="1604.7" y="801.2" width="5" height="3.2" fill="#e8e8e0"/><rect x="1643.7" y="801.2" width="5" height="3.2" fill="#e8e8e0"/><rect x="1610.2" y="767.3" width="33" height="41" fill="none" stroke="#fff" stroke-width="1.3"/><rect x="1611.2" y="768.3" width="31" height="39" fill="#3c3c3c"/><rect x="1624.7" y="782.8" width="3.2" height="10" fill="#6a6a6a"/><circle cx="1653.7" cy="803.8" r="2.4" fill="#ff10e8"/><circle cx="1647.7" cy="812.8" r="1.8" fill="#fff"/><text x="1693" y="764" font-size="12" text-anchor="middle" textLength="22.8" lengthAdjust="spacingAndGlyphs" stroke="#fff" stroke-width="0.45">R39</text><text x="1693" y="821.6" font-size="12" text-anchor="middle" textLength="22.8" lengthAdjust="spacingAndGlyphs" stroke="#fff" stroke-width="0.45">R35</text><path d="M1689 767 L1677.6 767 L1677.6 784 L1689 784" fill="none" stroke="#fff" stroke-width="2"/><path d="M1695 767 L1706.4 767 L1706.4 784 L1695 784" fill="none" stroke="#fff" stroke-width="2"/><rect x="1679.4" y="768.3" width="10" height="13.6" fill="#a2a2a0"/><rect x="1695" y="768.3" width="10" height="13.6" fill="#a2a2a0"/><rect x="1683.4" y="769.7" width="17.6" height="11.4" fill="#fdfdfd"/><rect x="1686.7" y="770" width="10.8" height="10.8" fill="#4e4e4e"/><path d="M1689 793.5 L1677.6 793.5 L1677.6 810.5 L1689 810.5" fill="none" stroke="#fff" stroke-width="2"/><path d="M1695 793.5 L1706.4 793.5 L1706.4 810.5 L1695 810.5" fill="none" stroke="#fff" stroke-width="2"/><rect x="1679.4" y="794.8" width="10" height="13.6" fill="#a2a2a0"/><rect x="1695" y="794.8" width="10" height="13.6" fill="#a2a2a0"/><rect x="1683.4" y="796.2" width="17.6" height="11.4" fill="#fdfdfd"/><rect x="1686.7" y="796.5" width="10.8" height="10.8" fill="#4e4e4e"/><path d="M1360 816 L1351.1 816 Q1348.6 816 1348.6 818.5 L1348.6 830.5 Q1348.6 833 1351.1 833 L1360 833" fill="none" stroke="#fff" stroke-width="2"/><path d="M1366 816 L1374.9 816 Q1377.4 816 1377.4 818.5 L1377.4 830.5 Q1377.4 833 1374.9 833 L1366 833" fill="none" stroke="#fff" stroke-width="2"/><rect x="1350.4" y="817.3" width="10" height="13.6" fill="#a2a2a0"/><rect x="1366" y="817.3" width="10" height="13.6" fill="#a2a2a0"/><rect x="1354.8" y="819.5" width="17" height="10.6" fill="#fdfdfd"/><rect x="1358.4" y="819.7" width="9.2" height="10.4" fill="#c4960c"/><text x="1363" y="845" font-size="12" text-anchor="middle" textLength="19.2" lengthAdjust="spacingAndGlyphs" stroke="#fff" stroke-width="0.45">C12</text><path d="M1607 816 L1598.1 816 Q1595.6 816 1595.6 818.5 L1595.6 830.5 Q1595.6 833 1598.1 833 L1607 833" fill="none" stroke="#fff" stroke-width="2"/><path d="M1613 816 L1621.9 816 Q1624.4 816 1624.4 818.5 L1624.4 830.5 Q1624.4 833 1621.9 833 L1613 833" fill="none" stroke="#fff" stroke-width="2"/><rect x="1597.4" y="817.3" width="10" height="13.6" fill="#a2a2a0"/><rect x="1613" y="817.3" width="10" height="13.6" fill="#a2a2a0"/><rect x="1601.8" y="819.5" width="17" height="10.6" fill="#fdfdfd"/><rect x="1605.4" y="819.7" width="9.2" height="10.4" fill="#c4960c"/><text x="1610" y="845" font-size="12" text-anchor="middle" textLength="19.2" lengthAdjust="spacingAndGlyphs" stroke="#fff" stroke-width="0.45">C13</text><text x="1366.5" y="865.4" font-size="12" text-anchor="middle" textLength="26.8" lengthAdjust="spacingAndGlyphs" stroke="#fff" stroke-width="0.45">LED1</text><path d="M1349.2 868.3 L1377.2 868.3 Q1381.2 868.3 1381.2 872.3 L1381.2 882.3 Q1381.2 886.3 1377.2 886.3 L1349.2 886.3 Q1345.2 886.3 1345.2 882.3 L1345.2 872.3 Q1345.2 868.3 1349.2 868.3Z" fill="none" stroke="#fff" stroke-width="1.8"/><rect x="1348.2" y="870.8" width="12" height="13" fill="#b4b4a4"/><rect x="1366.2" y="870.8" width="12" height="13" fill="#b4b4a4"/><rect x="1353.7" y="872.3" width="2.6" height="10" fill="#f2e11c"/><rect x="1370.2" y="872.3" width="2.6" height="10" fill="#f2e11c"/><rect x="1356.7" y="872.7" width="13" height="9.2" fill="#fbfbfb"/><path d="M1369.2 877.3 L1377.2 877.3 M1373.2 873.3 L1373.2 881.3" stroke="#ff10e8" stroke-width="1.5"/><path d="M1348.7 877.3 L1357.7 877.3" stroke="#ff10e8" stroke-width="1.5"/><text x="1413" y="865.4" font-size="12" text-anchor="middle" textLength="15.2" lengthAdjust="spacingAndGlyphs" stroke="#fff" stroke-width="0.45">R3</text><path d="M1410.4 868.9 L1399 868.9 L1399 885.9 L1410.4 885.9" fill="none" stroke="#fff" stroke-width="2"/><path d="M1416.4 868.9 L1427.8 868.9 L1427.8 885.9 L1416.4 885.9" fill="none" stroke="#fff" stroke-width="2"/><rect x="1400.8" y="870.2" width="10" height="13.6" fill="#a2a2a0"/><rect x="1416.4" y="870.2" width="10" height="13.6" fill="#a2a2a0"/><rect x="1404.8" y="871.6" width="17.6" height="11.4" fill="#fdfdfd"/><rect x="1408.1" y="871.9" width="10.8" height="10.8" fill="#4e4e4e"/><text x="1446" y="832" font-size="12" text-anchor="middle" textLength="15.2" lengthAdjust="spacingAndGlyphs" stroke="#fff" stroke-width="0.45">SW</text><rect x="1435" y="836" width="108" height="62" fill="#fdfdfd"/><rect x="1435" y="833" width="108" height="4" fill="#2a2a2a"/><rect x="1465" y="853" width="50" height="40" rx="2" fill="#1e1e1e"/><rect x="1492" y="853" width="23" height="40" fill="#333"/><circle cx="1487" cy="781.500" r="51.600" fill="#fff"/><circle cx="1487" cy="782" r="50.600" fill="#121212"/><circle cx="1487" cy="790.500" r="50.800" fill="url(#gbz)"/><circle cx="1486.600" cy="790.300" r="10.500" fill="#b0b0b0"/><circle cx="1486.600" cy="789.400" r="10.300" fill="#fff"/><path d="M1447.800 775.800 L1458.800 775.800 M1453.300 770.300 L1453.300 781.300" stroke="#ff10e8" stroke-width="1.9"/><circle cx="1457.300" cy="790.700" r="5.300" fill="#4a4a4a" stroke="#b4b4b4" stroke-width="1.5"/><path d="M1453.300 790.700 L1461.300 790.700 M1457.300 786.700 L1457.300 794.700" stroke="#c8c8c8" stroke-width="1.6"/></svg>
<div class="a" style="left:1085px;top:88px;width:11px;height:11px;background:#e6e6e6;border:1px solid #d4d4d4;border-radius:1px"></div><div class="a" style="left:1085px;top:109px;width:11px;height:11px;background:#e6e6e6;border:1px solid #d4d4d4;border-radius:1px"></div><div class="a" style="left:1105px;top:84px;font-size:12px;line-height:18px;color:#333;opacity:.9">仅选顶层器件</div><div class="a" style="left:1105px;top:105px;font-size:12px;line-height:18px;color:#333;opacity:.6">选中底层器件</div><div class="a" style="left:1414px;top:75px;width:74px;height:26px;border:1px solid #2d8cf0;border-radius:2px 0 0 2px;background:#fff"></div><div class="a" style="left:1487px;top:75px;width:74px;height:26px;border:1px solid #2d8cf0;border-radius:0 2px 2px 0;background:#e0f1ff"></div><div class="a" style="left:1441px;top:79px;font-size:13px;line-height:18px;color:#2d8cf0">2D</div><div class="a" style="left:1513px;top:79px;font-size:13px;line-height:18px;color:#2d8cf0;font-weight:bold">3D</div><svg class="a" style="left:1829px;top:81px" width="20" height="20" viewBox="0 0 20 20"><rect width="20" height="20" rx="1.5" fill="#b4b4b4" fill-opacity="0.92"/><path d="M4.500 12.500 L10 7 L15.500 12.500" fill="none" stroke="#fff" stroke-width="1.8"/></svg><svg class="a" style="left:1829px;top:137px" width="20" height="20" viewBox="0 0 20 20"><rect width="20" height="20" rx="1.5" fill="#b4b4b4" fill-opacity="0.92"/><path d="M4.500 7.500 L10 13 L15.500 7.500" fill="none" stroke="#fff" stroke-width="1.8"/></svg><svg class="a" style="left:1801px;top:109px" width="20" height="20" viewBox="0 0 20 20"><rect width="20" height="20" rx="1.5" fill="#b4b4b4" fill-opacity="0.92"/><path d="M12.500 4.500 L7 10 L12.500 15.500" fill="none" stroke="#fff" stroke-width="1.8"/></svg><svg class="a" style="left:1857px;top:109px" width="20" height="20" viewBox="0 0 20 20"><rect width="20" height="20" rx="1.5" fill="#b4b4b4" fill-opacity="0.92"/><path d="M7.500 4.500 L13 10 L7.500 15.500" fill="none" stroke="#fff" stroke-width="1.8"/></svg>
<div class="a" style="left:0;top:0;width:1909px;height:954px;overflow:hidden;pointer-events:none;z-index:40"><div class="a" style="left:-110px;top:560px;font-family:'Liberation Mono',monospace;font-size:19px;letter-spacing:1px;color:#9c9c9c;opacity:0.085;transform:rotate(-45deg);transform-origin:left top">lixiaomin 192.168.150.64 2022-04-13</div><div class="a" style="left:140px;top:300px;font-family:'Liberation Mono',monospace;font-size:19px;letter-spacing:1px;color:#9c9c9c;opacity:0.085;transform:rotate(-45deg);transform-origin:left top">lixiaomin 192.168.150.64 2022-04-13</div><div class="a" style="left:400px;top:560px;font-family:'Liberation Mono',monospace;font-size:19px;letter-spacing:1px;color:#9c9c9c;opacity:0.085;transform:rotate(-45deg);transform-origin:left top">lixiaomin 192.168.150.64 2022-04-13</div><div class="a" style="left:655px;top:300px;font-family:'Liberation Mono',monospace;font-size:19px;letter-spacing:1px;color:#9c9c9c;opacity:0.085;transform:rotate(-45deg);transform-origin:left top">lixiaomin 192.168.150.64 2022-04-13</div><div class="a" style="left:910px;top:560px;font-family:'Liberation Mono',monospace;font-size:19px;letter-spacing:1px;color:#9c9c9c;opacity:0.085;transform:rotate(-45deg);transform-origin:left top">lixiaomin 192.168.150.64 2022-04-13</div><div class="a" style="left:1165px;top:300px;font-family:'Liberation Mono',monospace;font-size:19px;letter-spacing:1px;color:#9c9c9c;opacity:0.085;transform:rotate(-45deg);transform-origin:left top">lixiaomin 192.168.150.64 2022-04-13</div><div class="a" style="left:1420px;top:560px;font-family:'Liberation Mono',monospace;font-size:19px;letter-spacing:1px;color:#9c9c9c;opacity:0.085;transform:rotate(-45deg);transform-origin:left top">lixiaomin 192.168.150.64 2022-04-13</div><div class="a" style="left:1675px;top:300px;font-family:'Liberation Mono',monospace;font-size:19px;letter-spacing:1px;color:#9c9c9c;opacity:0.085;transform:rotate(-45deg);transform-origin:left top">lixiaomin 192.168.150.64 2022-04-13</div><div class="a" style="left:140px;top:820px;font-family:'Liberation Mono',monospace;font-size:19px;letter-spacing:1px;color:#9c9c9c;opacity:0.085;transform:rotate(-45deg);transform-origin:left top">lixiaomin 192.168.150.64 2022-04-13</div><div class="a" style="left:655px;top:820px;font-family:'Liberation Mono',monospace;font-size:19px;letter-spacing:1px;color:#9c9c9c;opacity:0.085;transform:rotate(-45deg);transform-origin:left top">lixiaomin 192.168.150.64 2022-04-13</div><div class="a" style="left:1165px;top:820px;font-family:'Liberation Mono',monospace;font-size:19px;letter-spacing:1px;color:#9c9c9c;opacity:0.085;transform:rotate(-45deg);transform-origin:left top">lixiaomin 192.168.150.64 2022-04-13</div><div class="a" style="left:1675px;top:820px;font-family:'Liberation Mono',monospace;font-size:19px;letter-spacing:1px;color:#9c9c9c;opacity:0.085;transform:rotate(-45deg);transform-origin:left top">lixiaomin 192.168.150.64 2022-04-13</div><div class="a" style="left:400px;top:40px;font-family:'Liberation Mono',monospace;font-size:19px;letter-spacing:1px;color:#9c9c9c;opacity:0.085;transform:rotate(-45deg);transform-origin:left top">lixiaomin 192.168.150.64 2022-04-13</div><div class="a" style="left:910px;top:40px;font-family:'Liberation Mono',monospace;font-size:19px;letter-spacing:1px;color:#9c9c9c;opacity:0.085;transform:rotate(-45deg);transform-origin:left top">lixiaomin 192.168.150.64 2022-04-13</div><div class="a" style="left:1420px;top:40px;font-family:'Liberation Mono',monospace;font-size:19px;letter-spacing:1px;color:#9c9c9c;opacity:0.085;transform:rotate(-45deg);transform-origin:left top">lixiaomin 192.168.150.64 2022-04-13</div><div class="a" style="left:-110px;top:40px;font-family:'Liberation Mono',monospace;font-size:19px;letter-spacing:1px;color:#9c9c9c;opacity:0.085;transform:rotate(-45deg);transform-origin:left top">lixiaomin 192.168.150.64 2022-04-13</div></div>

</body></html>
